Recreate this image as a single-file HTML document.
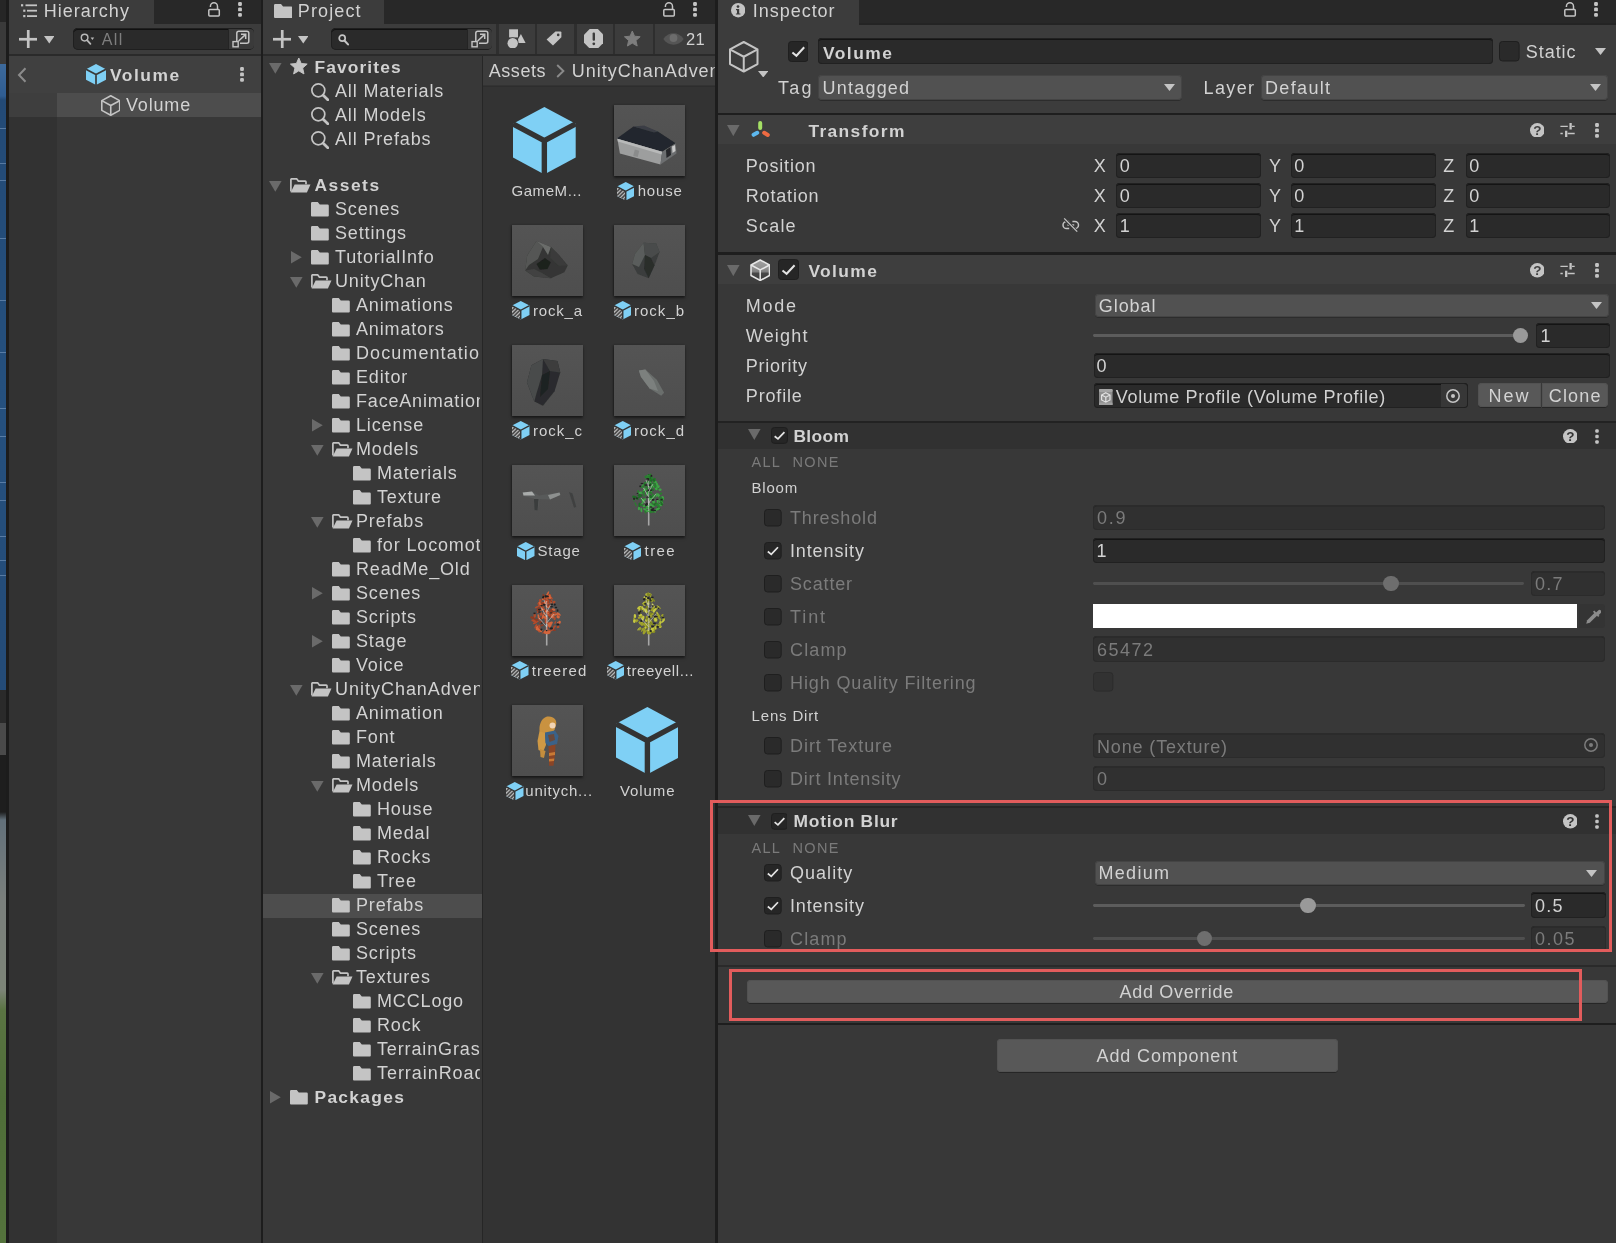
<!DOCTYPE html><html><head><meta charset="utf-8"><title>Unity Editor</title><style>html,body{margin:0;padding:0;}body{width:1616px;height:1243px;overflow:hidden;background:#383838;font-family:"Liberation Sans", sans-serif;position:relative;}div,span,svg{position:absolute;display:block;}span{white-space:nowrap;}</style></head><body><div id="root" style="left:0;top:0;width:1616px;height:1243px;will-change:transform;">
<div style="left:0px;top:0px;width:5.7px;height:1243px;background:#2a2a2a;"></div>
<div style="left:0;top:0;width:5.7px;height:1243px;background:linear-gradient(to bottom,#262626 0,#262626 22px,#3a3a3a 22px,#3a3a3a 64px,#3d6a9c 64px,#2f5d92 96px,#234a76 100px,#25507e 400px,#244b77 690px,#2a2a2a 690px,#2a2a2a 723px,#4a4a4a 723px,#4a4a4a 755px,#1e1e1e 755px,#1e1e1e 812px,#62707a 820px,#7a7f7c 900px,#7c8477 990px,#5a7442 1010px,#4f6e38 1100px,#54733c 1243px);"></div>
<div style="left:0px;top:128px;width:5.7px;height:1.2px;background:rgba(150,180,215,0.45);"></div>
<div style="left:0px;top:163px;width:5.7px;height:1.2px;background:rgba(150,180,215,0.45);"></div>
<div style="left:0px;top:180px;width:5.7px;height:1.2px;background:rgba(150,180,215,0.45);"></div>
<div style="left:0px;top:238px;width:5.7px;height:1.2px;background:rgba(150,180,215,0.45);"></div>
<div style="left:0px;top:300px;width:5.7px;height:1.2px;background:rgba(150,180,215,0.45);"></div>
<div style="left:0px;top:352px;width:5.7px;height:1.2px;background:rgba(150,180,215,0.45);"></div>
<div style="left:0px;top:408px;width:5.7px;height:1.2px;background:rgba(150,180,215,0.45);"></div>
<div style="left:0px;top:436px;width:5.7px;height:1.2px;background:rgba(150,180,215,0.45);"></div>
<div style="left:0px;top:482px;width:5.7px;height:1.2px;background:rgba(150,180,215,0.45);"></div>
<div style="left:0px;top:500px;width:5.7px;height:1.2px;background:rgba(150,180,215,0.45);"></div>
<div style="left:0px;top:536px;width:5.7px;height:1.2px;background:rgba(150,180,215,0.45);"></div>
<div style="left:0px;top:560px;width:5.7px;height:1.2px;background:rgba(150,180,215,0.45);"></div>
<div style="left:0px;top:575px;width:5.7px;height:1.2px;background:rgba(150,180,215,0.45);"></div>
<div style="left:5.7px;top:0px;width:3.3px;height:1243px;background:#1c1c1c;"></div>
<div style="left:9px;top:0px;width:251.5px;height:23.5px;background:#282828;"></div>
<div style="left:9px;top:0px;width:145px;height:23.5px;background:#3c3c3c;"></div>
<div style="left:9px;top:23.5px;width:251.5px;height:30.8px;background:#3c3c3c;"></div>
<div style="left:9px;top:54.3px;width:251.5px;height:1.5px;background:#2a2a2a;"></div>
<div style="left:9px;top:55.8px;width:251.5px;height:1187.2px;background:#383838;"></div>
<div style="left:9px;top:55.8px;width:48px;height:1187.2px;background:#323232;"></div>
<div style="left:9px;top:55.8px;width:251.5px;height:37px;background:#404040;"></div>
<div style="left:9px;top:92.8px;width:48px;height:23.8px;background:#3e3e3e;"></div>
<div style="left:57px;top:92.8px;width:203.5px;height:23.8px;background:#4d4d4d;"></div>
<div style="left:260.5px;top:0px;width:2.2px;height:1243px;background:#1d1d1d;"></div>
<svg style="left:21px;top:3.5px;" width="17" height="14" viewBox="0 0 17 14"><g fill="#c4c4c4"><rect x="0" y="0.2" width="2.2" height="2.2"/><rect x="4.5" y="0.4" width="11.5" height="1.8"/><rect x="2.2" y="5.6" width="2.2" height="2.2"/><rect x="6" y="5.8" width="10" height="1.8"/><rect x="2.2" y="11" width="2.2" height="2.2"/><rect x="6" y="11.2" width="10" height="1.8"/></g></svg>
<span style="left:43.8px;top:-1.5px;font-size:18px;line-height:24px;color:#d2d2d2;letter-spacing:1.01px;">Hierarchy</span>
<svg style="left:207.6px;top:2.3px;" width="13" height="16" viewBox="0 0 13 16"><rect x="0.8" y="7.6" width="10.5" height="6.4" rx="0.9" fill="none" stroke="#c4c4c4" stroke-width="1.5"/><path d="M9.5 7.4 V4.4 a3.55 3.55 0 0 0 -7.1 0 V4.9" fill="none" stroke="#c4c4c4" stroke-width="1.5"/></svg>
<svg style="left:237px;top:0.85px;" width="6" height="16.9" viewBox="0 0 6 16.9"><rect x="1.1" y="1.1" width="3.8" height="3.8" rx="1.2" fill="#c4c4c4"/><rect x="1.1" y="6.55" width="3.8" height="3.8" rx="1.2" fill="#c4c4c4"/><rect x="1.1" y="12" width="3.8" height="3.8" rx="1.2" fill="#c4c4c4"/></svg>
<svg style="left:18.75px;top:29.75px;" width="18.5" height="18.5" viewBox="0 0 18.5 18.5"><rect x="0" y="7.9" width="18.5" height="2.7" fill="#c4c4c4"/><rect x="7.9" y="0" width="2.7" height="18.5" fill="#c4c4c4"/></svg>
<svg style="left:43.75px;top:36.25px;" width="10.5" height="7.5" viewBox="0 0 10.5 7.5"><polygon points="0,0 10.5,0 5.25,7.5" fill="#c4c4c4"/></svg>
<div style="left:72.9px;top:27.5px;width:181.1px;height:22.5px;background:#2a2a2a;border-radius:5px;box-shadow:inset 0 0 0 1px #1f1f1f, inset 0 2px 0 0 #111111;"></div>
<div style="left:227.5px;top:28.5px;width:25.5px;height:20.5px;background:#3a3a3a;border-radius:0 4px 4px 0;border-left:1px solid #242424;"></div>
<svg style="left:80px;top:32.5px;" width="16" height="13" viewBox="0 0 16 13"><circle cx="4.6" cy="4.6" r="3.3" fill="none" stroke="#b8b8b8" stroke-width="1.45"/><line x1="7" y1="7.2" x2="10.4" y2="10.8" stroke="#b8b8b8" stroke-width="1.8" stroke-linecap="round"/><polygon points="10.6,4.6 14.2,4.6 12.4,7" fill="#b8b8b8"/></svg>
<span style="left:101.8px;top:27.5px;font-size:16px;line-height:24px;color:#7e7e7e;letter-spacing:1.36px;">All</span>
<svg style="left:232px;top:30px;" width="18" height="18" viewBox="0 0 18 18"><path d="M4.8 11.2 V3.2 a2 2 0 0 1 2 -2 H14.8 a2 2 0 0 1 2 2 V11.2 a2 2 0 0 1 -2 2 H8" fill="none" stroke="#c4c4c4" stroke-width="1.5"/><rect x="1" y="11.6" width="5.2" height="5.2" fill="none" stroke="#c4c4c4" stroke-width="1.4"/><path d="M6.6 11 L13.4 4.6 M9 4.3 H13.7 V9" fill="none" stroke="#c4c4c4" stroke-width="1.5"/></svg>
<svg style="left:16.5px;top:66.5px;" width="10" height="16" viewBox="0 0 10 16"><path d="M8.5 1.2 L2 8 L8.5 14.8" fill="none" stroke="#8c8c8c" stroke-width="2"/></svg>
<svg style="left:86px;top:63.5px;" width="20" height="21" viewBox="0 0 20 21"><polygon points="10,0 20,5.25 20,15.75 10,21 0,15.75 0,5.25" fill="#7fd0f5"/><path d="M0 5.25 L10 10.5 L20 5.25 M10 10.5 V21" fill="none" stroke="#3a3a3a" stroke-width="1.7"/></svg>
<span style="left:110px;top:63px;font-size:17.4px;line-height:24px;color:#d2d2d2;letter-spacing:1.51px;font-weight:bold;">Volume</span>
<svg style="left:238.5px;top:65.75px;" width="6" height="16.9" viewBox="0 0 6 16.9"><rect x="1.1" y="1.1" width="3.8" height="3.8" rx="1.2" fill="#c4c4c4"/><rect x="1.1" y="6.55" width="3.8" height="3.8" rx="1.2" fill="#c4c4c4"/><rect x="1.1" y="12" width="3.8" height="3.8" rx="1.2" fill="#c4c4c4"/></svg>
<svg style="left:100.5px;top:94.5px;" width="19.5" height="21" viewBox="0 0 19.5 21"><polygon points="9.75,0.8 18.7,5.65 18.7,15.35 9.75,20.2 0.8,15.35 0.8,5.65" fill="none" stroke="#c4c4c4" stroke-width="1.6" stroke-linejoin="round"/><path d="M0.8 5.65 L9.75 10.5 L18.7 5.65 M9.75 10.5 V20.2" fill="none" stroke="#c4c4c4" stroke-width="1.6"/></svg>
<span style="left:126px;top:92.5px;font-size:18px;line-height:24px;color:#d2d2d2;letter-spacing:0.83px;">Volume</span>
<div style="left:262.7px;top:0px;width:452.6px;height:23.5px;background:#282828;"></div>
<div style="left:262.7px;top:0px;width:121.3px;height:23.5px;background:#3c3c3c;"></div>
<div style="left:262.7px;top:23.5px;width:452.6px;height:30.8px;background:#3c3c3c;"></div>
<div style="left:262.7px;top:54.3px;width:452.6px;height:1.5px;background:#2a2a2a;"></div>
<div style="left:262.7px;top:55.8px;width:219px;height:1187.2px;background:#383838;"></div>
<div style="left:481.7px;top:55.8px;width:1.7px;height:1187.2px;background:#262626;"></div>
<div style="left:483.4px;top:55.8px;width:231.9px;height:1187.2px;background:#333333;"></div>
<div style="left:483.4px;top:55.8px;width:231.9px;height:29.7px;background:#3c3c3c;"></div>
<div style="left:483.4px;top:85.5px;width:231.9px;height:1.3px;background:#2d2d2d;"></div>
<div style="left:715.3px;top:0px;width:2.3px;height:1243px;background:#1d1d1d;"></div>
<svg style="left:273.7px;top:4px;" width="18.5" height="14" viewBox="0 0 18.5 14"><path d="M0 1.2 a1.2 1.2 0 0 1 1.2 -1.2 H7.03 l2 2.6 H17.3 a1.2 1.2 0 0 1 1.2 1.2 V13 a1 1 0 0 1 -1 1 H1 a1 1 0 0 1 -1 -1 Z" fill="#c4c4c4"/></svg>
<span style="left:297.8px;top:-1.5px;font-size:18px;line-height:24px;color:#d2d2d2;letter-spacing:1.13px;">Project</span>
<svg style="left:662.6px;top:2.3px;" width="13" height="16" viewBox="0 0 13 16"><rect x="0.8" y="7.6" width="10.5" height="6.4" rx="0.9" fill="none" stroke="#c4c4c4" stroke-width="1.5"/><path d="M9.5 7.4 V4.4 a3.55 3.55 0 0 0 -7.1 0 V4.9" fill="none" stroke="#c4c4c4" stroke-width="1.5"/></svg>
<svg style="left:692.3px;top:0.85px;" width="6" height="16.9" viewBox="0 0 6 16.9"><rect x="1.1" y="1.1" width="3.8" height="3.8" rx="1.2" fill="#c4c4c4"/><rect x="1.1" y="6.55" width="3.8" height="3.8" rx="1.2" fill="#c4c4c4"/><rect x="1.1" y="12" width="3.8" height="3.8" rx="1.2" fill="#c4c4c4"/></svg>
<svg style="left:272.75px;top:29.75px;" width="18.5" height="18.5" viewBox="0 0 18.5 18.5"><rect x="0" y="7.9" width="18.5" height="2.7" fill="#c4c4c4"/><rect x="7.9" y="0" width="2.7" height="18.5" fill="#c4c4c4"/></svg>
<svg style="left:297.75px;top:36.25px;" width="10.5" height="7.5" viewBox="0 0 10.5 7.5"><polygon points="0,0 10.5,0 5.25,7.5" fill="#c4c4c4"/></svg>
<div style="left:331px;top:27.5px;width:161px;height:22.5px;background:#2a2a2a;border-radius:5px;box-shadow:inset 0 0 0 1px #1f1f1f, inset 0 2px 0 0 #111111;"></div>
<div style="left:466.5px;top:28.5px;width:24.5px;height:20.5px;background:#3a3a3a;border-radius:0 4px 4px 0;border-left:1px solid #242424;"></div>
<svg style="left:338px;top:33.5px;" width="12" height="12" viewBox="0 0 12 12"><circle cx="4.2" cy="4.2" r="3" fill="none" stroke="#c4c4c4" stroke-width="1.7"/><line x1="6.6" y1="6.8" x2="10" y2="10.4" stroke="#c4c4c4" stroke-width="2.1" stroke-linecap="round"/></svg>
<svg style="left:470.5px;top:30px;" width="18" height="18" viewBox="0 0 18 18"><path d="M4.8 11.2 V3.2 a2 2 0 0 1 2 -2 H14.8 a2 2 0 0 1 2 2 V11.2 a2 2 0 0 1 -2 2 H8" fill="none" stroke="#c4c4c4" stroke-width="1.5"/><rect x="1" y="11.6" width="5.2" height="5.2" fill="none" stroke="#c4c4c4" stroke-width="1.4"/><path d="M6.6 11 L13.4 4.6 M9 4.3 H13.7 V9" fill="none" stroke="#c4c4c4" stroke-width="1.5"/></svg>
<div style="left:496.4px;top:23.5px;width:2.4px;height:30.8px;background:#2e2e2e;"></div>
<div style="left:535.1px;top:23.5px;width:2.4px;height:30.8px;background:#2e2e2e;"></div>
<div style="left:574.4px;top:23.5px;width:2.4px;height:30.8px;background:#2e2e2e;"></div>
<div style="left:613px;top:23.5px;width:2.4px;height:30.8px;background:#2e2e2e;"></div>
<div style="left:652.6px;top:23.5px;width:2.4px;height:30.8px;background:#2e2e2e;"></div>
<svg style="left:506.5px;top:28.5px;" width="19" height="19.5" viewBox="0 0 19 19.5"><g fill="#c4c4c4"><rect x="2.1" y="0.3" width="8.9" height="8.1"/><circle cx="5.7" cy="14.3" r="5.9" fill="#3c3c3c"/><circle cx="5.7" cy="14.3" r="5.2"/><polygon points="13.9,5 18.6,13.9 11.6,13.9 11,10.2"/></g></svg>
<svg style="left:546px;top:31px;" width="16" height="15" viewBox="0 0 16 15"><path d="M9.4 0.6 H14.4 a1 1 0 0 1 1 1 V6.2 L7 14.4 L0.6 8.4 Z" fill="#c4c4c4"/><circle cx="12.2" cy="3.9" r="1.3" fill="#3c3c3c"/></svg>
<svg style="left:583.5px;top:28.5px;" width="19.5" height="19.5" viewBox="0 0 19.5 19.5"><polygon points="5.7,0 13.8,0 19.5,5.7 19.5,13.8 13.8,19.5 5.7,19.5 0,13.8 0,5.7" fill="#c4c4c4"/><rect x="8.6" y="3.6" width="2.4" height="8.2" rx="1" fill="#3c3c3c"/><circle cx="9.8" cy="14.8" r="1.4" fill="#3c3c3c"/></svg>
<svg style="left:624.3px;top:30.7px;" width="16.6" height="16.6" viewBox="0 0 16.6 16.6"><polygon points="8.3,0 10.54,5.21 16.19,5.74 11.93,9.48 13.18,15.01 8.3,12.12 3.42,15.01 4.67,9.48 0.41,5.74 6.06,5.21" fill="#7d7d7d" stroke="#7d7d7d" stroke-width="1" stroke-linejoin="round"/></svg>
<svg style="left:662.5px;top:32.5px;" width="21" height="12" viewBox="0 0 21 12"><path d="M0.3 6 C5 -1.6 16 -1.6 20.7 6 C16 13.6 5 13.6 0.3 6 Z" fill="#555555"/><circle cx="10.5" cy="5" r="3.9" fill="#6c6c6c"/></svg>
<span style="left:686px;top:27.3px;font-size:16.5px;line-height:24px;color:#d2d2d2;letter-spacing:0.24px;">21</span>
<span style="left:488.7px;top:58.5px;font-size:18px;line-height:24px;color:#d2d2d2;letter-spacing:0.57px;">Assets</span>
<svg style="left:556px;top:63.8px;" width="9" height="14" viewBox="0 0 9 14"><path d="M1.2 1 L7.4 7 L1.2 13" fill="none" stroke="#8a8a8a" stroke-width="1.9"/></svg>
<span style="left:571.8px;top:58.5px;font-size:18px;line-height:24px;color:#d2d2d2;letter-spacing:0.98px;width:143.5px;overflow:hidden;">UnityChanAdventure</span>
<div style="left:262.7px;top:894px;width:219px;height:23.6px;background:#4d4d4d;"></div>
<svg style="left:269px;top:62.8px;" width="12.6" height="10.8" viewBox="0 0 12.6 10.8"><polygon points="0,0 12.6,0 6.3,10.8" fill="#6a6a6a"/></svg>
<svg style="left:290.2px;top:58.2px;" width="17.6" height="17.6" viewBox="0 0 17.6 17.6"><polygon points="8.8,0 11.18,5.53 17.17,6.08 12.65,10.05 13.97,15.92 8.8,12.85 3.63,15.92 4.95,10.05 0.43,6.08 6.42,5.53" fill="#c4c4c4" stroke="#c4c4c4" stroke-width="1" stroke-linejoin="round"/></svg>
<span style="left:314.5px;top:54.7px;font-size:17.4px;line-height:24px;color:#d2d2d2;letter-spacing:1.1px;font-weight:bold;width:165.2px;overflow:hidden;">Favorites</span>
<svg style="left:311px;top:82.5px;" width="18" height="18" viewBox="0 0 18 18"><circle cx="7.33" cy="7.33" r="6.48" fill="none" stroke="#c4c4c4" stroke-width="1.7"/><line x1="12.19" y1="12.19" x2="16.8" y2="16.8" stroke="#c4c4c4" stroke-width="2.72" stroke-linecap="round"/></svg>
<span style="left:335px;top:78.7px;font-size:18px;line-height:24px;color:#d2d2d2;letter-spacing:0.5px;width:144.7px;overflow:hidden;letter-spacing:0.85px;">All Materials</span>
<svg style="left:311px;top:106.5px;" width="18" height="18" viewBox="0 0 18 18"><circle cx="7.33" cy="7.33" r="6.48" fill="none" stroke="#c4c4c4" stroke-width="1.7"/><line x1="12.19" y1="12.19" x2="16.8" y2="16.8" stroke="#c4c4c4" stroke-width="2.72" stroke-linecap="round"/></svg>
<span style="left:335px;top:102.7px;font-size:18px;line-height:24px;color:#d2d2d2;letter-spacing:0.5px;width:144.7px;overflow:hidden;letter-spacing:0.85px;">All Models</span>
<svg style="left:311px;top:130.5px;" width="18" height="18" viewBox="0 0 18 18"><circle cx="7.33" cy="7.33" r="6.48" fill="none" stroke="#c4c4c4" stroke-width="1.7"/><line x1="12.19" y1="12.19" x2="16.8" y2="16.8" stroke="#c4c4c4" stroke-width="2.72" stroke-linecap="round"/></svg>
<span style="left:335px;top:126.7px;font-size:18px;line-height:24px;color:#d2d2d2;letter-spacing:0.5px;width:144.7px;overflow:hidden;letter-spacing:0.85px;">All Prefabs</span>
<svg style="left:269px;top:180.8px;" width="12.6" height="10.8" viewBox="0 0 12.6 10.8"><polygon points="0,0 12.6,0 6.3,10.8" fill="#6a6a6a"/></svg>
<svg style="left:290px;top:178px;" width="20.5" height="14.5" viewBox="0 0 20.5 14.5"><path d="M0.9 13.5 V1.6 a0.8 0.8 0 0 1 0.8 -0.8 H6.6 l1.8 2.3 H15.2 a0.8 0.8 0 0 1 0.8 0.8 V6.2" fill="none" stroke="#c4c4c4" stroke-width="1.7"/><path d="M4.6 6.4 H20.5 L16.9 14.5 H0.6 Z" fill="#c4c4c4"/></svg>
<span style="left:314.5px;top:172.7px;font-size:17.4px;line-height:24px;color:#d2d2d2;letter-spacing:1.51px;font-weight:bold;width:165.2px;overflow:hidden;">Assets</span>
<svg style="left:311px;top:202px;" width="17.8" height="14.5" viewBox="0 0 17.8 14.5"><path d="M0 1.2 a1.2 1.2 0 0 1 1.2 -1.2 H6.76 l2 2.6 H16.6 a1.2 1.2 0 0 1 1.2 1.2 V13.5 a1 1 0 0 1 -1 1 H1 a1 1 0 0 1 -1 -1 Z" fill="#c4c4c4"/></svg>
<span style="left:335px;top:196.7px;font-size:18px;line-height:24px;color:#d2d2d2;letter-spacing:0.5px;width:144.7px;overflow:hidden;letter-spacing:0.85px;">Scenes</span>
<svg style="left:311px;top:226px;" width="17.8" height="14.5" viewBox="0 0 17.8 14.5"><path d="M0 1.2 a1.2 1.2 0 0 1 1.2 -1.2 H6.76 l2 2.6 H16.6 a1.2 1.2 0 0 1 1.2 1.2 V13.5 a1 1 0 0 1 -1 1 H1 a1 1 0 0 1 -1 -1 Z" fill="#c4c4c4"/></svg>
<span style="left:335px;top:220.7px;font-size:18px;line-height:24px;color:#d2d2d2;letter-spacing:0.5px;width:144.7px;overflow:hidden;letter-spacing:0.85px;">Settings</span>
<svg style="left:291.4px;top:251.2px;" width="10.8" height="12.6" viewBox="0 0 10.8 12.6"><polygon points="0,0 10.8,6.3 0,12.6" fill="#6a6a6a"/></svg>
<svg style="left:311px;top:250px;" width="17.8" height="14.5" viewBox="0 0 17.8 14.5"><path d="M0 1.2 a1.2 1.2 0 0 1 1.2 -1.2 H6.76 l2 2.6 H16.6 a1.2 1.2 0 0 1 1.2 1.2 V13.5 a1 1 0 0 1 -1 1 H1 a1 1 0 0 1 -1 -1 Z" fill="#c4c4c4"/></svg>
<span style="left:335px;top:244.7px;font-size:18px;line-height:24px;color:#d2d2d2;letter-spacing:0.5px;width:144.7px;overflow:hidden;letter-spacing:0.85px;">TutorialInfo</span>
<svg style="left:290px;top:276.8px;" width="12.6" height="10.8" viewBox="0 0 12.6 10.8"><polygon points="0,0 12.6,0 6.3,10.8" fill="#6a6a6a"/></svg>
<svg style="left:311px;top:274px;" width="20.5" height="14.5" viewBox="0 0 20.5 14.5"><path d="M0.9 13.5 V1.6 a0.8 0.8 0 0 1 0.8 -0.8 H6.6 l1.8 2.3 H15.2 a0.8 0.8 0 0 1 0.8 0.8 V6.2" fill="none" stroke="#c4c4c4" stroke-width="1.7"/><path d="M4.6 6.4 H20.5 L16.9 14.5 H0.6 Z" fill="#c4c4c4"/></svg>
<span style="left:335px;top:268.7px;font-size:18px;line-height:24px;color:#d2d2d2;letter-spacing:0.5px;width:144.7px;overflow:hidden;letter-spacing:0.85px;">UnityChan</span>
<svg style="left:332px;top:298px;" width="17.8" height="14.5" viewBox="0 0 17.8 14.5"><path d="M0 1.2 a1.2 1.2 0 0 1 1.2 -1.2 H6.76 l2 2.6 H16.6 a1.2 1.2 0 0 1 1.2 1.2 V13.5 a1 1 0 0 1 -1 1 H1 a1 1 0 0 1 -1 -1 Z" fill="#c4c4c4"/></svg>
<span style="left:356px;top:292.7px;font-size:18px;line-height:24px;color:#d2d2d2;letter-spacing:0.5px;width:123.7px;overflow:hidden;letter-spacing:0.85px;">Animations</span>
<svg style="left:332px;top:322px;" width="17.8" height="14.5" viewBox="0 0 17.8 14.5"><path d="M0 1.2 a1.2 1.2 0 0 1 1.2 -1.2 H6.76 l2 2.6 H16.6 a1.2 1.2 0 0 1 1.2 1.2 V13.5 a1 1 0 0 1 -1 1 H1 a1 1 0 0 1 -1 -1 Z" fill="#c4c4c4"/></svg>
<span style="left:356px;top:316.7px;font-size:18px;line-height:24px;color:#d2d2d2;letter-spacing:0.5px;width:123.7px;overflow:hidden;letter-spacing:0.85px;">Animators</span>
<svg style="left:332px;top:346px;" width="17.8" height="14.5" viewBox="0 0 17.8 14.5"><path d="M0 1.2 a1.2 1.2 0 0 1 1.2 -1.2 H6.76 l2 2.6 H16.6 a1.2 1.2 0 0 1 1.2 1.2 V13.5 a1 1 0 0 1 -1 1 H1 a1 1 0 0 1 -1 -1 Z" fill="#c4c4c4"/></svg>
<span style="left:356px;top:340.7px;font-size:18px;line-height:24px;color:#d2d2d2;letter-spacing:1.08px;width:123.7px;overflow:hidden;">Documentation</span>
<svg style="left:332px;top:370px;" width="17.8" height="14.5" viewBox="0 0 17.8 14.5"><path d="M0 1.2 a1.2 1.2 0 0 1 1.2 -1.2 H6.76 l2 2.6 H16.6 a1.2 1.2 0 0 1 1.2 1.2 V13.5 a1 1 0 0 1 -1 1 H1 a1 1 0 0 1 -1 -1 Z" fill="#c4c4c4"/></svg>
<span style="left:356px;top:364.7px;font-size:18px;line-height:24px;color:#d2d2d2;letter-spacing:0.5px;width:123.7px;overflow:hidden;letter-spacing:0.85px;">Editor</span>
<svg style="left:332px;top:394px;" width="17.8" height="14.5" viewBox="0 0 17.8 14.5"><path d="M0 1.2 a1.2 1.2 0 0 1 1.2 -1.2 H6.76 l2 2.6 H16.6 a1.2 1.2 0 0 1 1.2 1.2 V13.5 a1 1 0 0 1 -1 1 H1 a1 1 0 0 1 -1 -1 Z" fill="#c4c4c4"/></svg>
<span style="left:356px;top:388.7px;font-size:18px;line-height:24px;color:#d2d2d2;letter-spacing:0.81px;width:123.7px;overflow:hidden;">FaceAnimation</span>
<svg style="left:312.4px;top:419.2px;" width="10.8" height="12.6" viewBox="0 0 10.8 12.6"><polygon points="0,0 10.8,6.3 0,12.6" fill="#6a6a6a"/></svg>
<svg style="left:332px;top:418px;" width="17.8" height="14.5" viewBox="0 0 17.8 14.5"><path d="M0 1.2 a1.2 1.2 0 0 1 1.2 -1.2 H6.76 l2 2.6 H16.6 a1.2 1.2 0 0 1 1.2 1.2 V13.5 a1 1 0 0 1 -1 1 H1 a1 1 0 0 1 -1 -1 Z" fill="#c4c4c4"/></svg>
<span style="left:356px;top:412.7px;font-size:18px;line-height:24px;color:#d2d2d2;letter-spacing:0.5px;width:123.7px;overflow:hidden;letter-spacing:0.85px;">License</span>
<svg style="left:311px;top:444.8px;" width="12.6" height="10.8" viewBox="0 0 12.6 10.8"><polygon points="0,0 12.6,0 6.3,10.8" fill="#6a6a6a"/></svg>
<svg style="left:332px;top:442px;" width="20.5" height="14.5" viewBox="0 0 20.5 14.5"><path d="M0.9 13.5 V1.6 a0.8 0.8 0 0 1 0.8 -0.8 H6.6 l1.8 2.3 H15.2 a0.8 0.8 0 0 1 0.8 0.8 V6.2" fill="none" stroke="#c4c4c4" stroke-width="1.7"/><path d="M4.6 6.4 H20.5 L16.9 14.5 H0.6 Z" fill="#c4c4c4"/></svg>
<span style="left:356px;top:436.7px;font-size:18px;line-height:24px;color:#d2d2d2;letter-spacing:0.5px;width:123.7px;overflow:hidden;letter-spacing:0.85px;">Models</span>
<svg style="left:353px;top:466px;" width="17.8" height="14.5" viewBox="0 0 17.8 14.5"><path d="M0 1.2 a1.2 1.2 0 0 1 1.2 -1.2 H6.76 l2 2.6 H16.6 a1.2 1.2 0 0 1 1.2 1.2 V13.5 a1 1 0 0 1 -1 1 H1 a1 1 0 0 1 -1 -1 Z" fill="#c4c4c4"/></svg>
<span style="left:377px;top:460.7px;font-size:18px;line-height:24px;color:#d2d2d2;letter-spacing:0.5px;width:102.7px;overflow:hidden;letter-spacing:0.85px;">Materials</span>
<svg style="left:353px;top:490px;" width="17.8" height="14.5" viewBox="0 0 17.8 14.5"><path d="M0 1.2 a1.2 1.2 0 0 1 1.2 -1.2 H6.76 l2 2.6 H16.6 a1.2 1.2 0 0 1 1.2 1.2 V13.5 a1 1 0 0 1 -1 1 H1 a1 1 0 0 1 -1 -1 Z" fill="#c4c4c4"/></svg>
<span style="left:377px;top:484.7px;font-size:18px;line-height:24px;color:#d2d2d2;letter-spacing:0.5px;width:102.7px;overflow:hidden;letter-spacing:0.85px;">Texture</span>
<svg style="left:311px;top:516.8px;" width="12.6" height="10.8" viewBox="0 0 12.6 10.8"><polygon points="0,0 12.6,0 6.3,10.8" fill="#6a6a6a"/></svg>
<svg style="left:332px;top:514px;" width="20.5" height="14.5" viewBox="0 0 20.5 14.5"><path d="M0.9 13.5 V1.6 a0.8 0.8 0 0 1 0.8 -0.8 H6.6 l1.8 2.3 H15.2 a0.8 0.8 0 0 1 0.8 0.8 V6.2" fill="none" stroke="#c4c4c4" stroke-width="1.7"/><path d="M4.6 6.4 H20.5 L16.9 14.5 H0.6 Z" fill="#c4c4c4"/></svg>
<span style="left:356px;top:508.7px;font-size:18px;line-height:24px;color:#d2d2d2;letter-spacing:0.5px;width:123.7px;overflow:hidden;letter-spacing:0.85px;">Prefabs</span>
<svg style="left:353px;top:538px;" width="17.8" height="14.5" viewBox="0 0 17.8 14.5"><path d="M0 1.2 a1.2 1.2 0 0 1 1.2 -1.2 H6.76 l2 2.6 H16.6 a1.2 1.2 0 0 1 1.2 1.2 V13.5 a1 1 0 0 1 -1 1 H1 a1 1 0 0 1 -1 -1 Z" fill="#c4c4c4"/></svg>
<span style="left:377px;top:532.7px;font-size:18px;line-height:24px;color:#d2d2d2;letter-spacing:0.85px;width:102.7px;overflow:hidden;">for Locomotion</span>
<svg style="left:332px;top:562px;" width="17.8" height="14.5" viewBox="0 0 17.8 14.5"><path d="M0 1.2 a1.2 1.2 0 0 1 1.2 -1.2 H6.76 l2 2.6 H16.6 a1.2 1.2 0 0 1 1.2 1.2 V13.5 a1 1 0 0 1 -1 1 H1 a1 1 0 0 1 -1 -1 Z" fill="#c4c4c4"/></svg>
<span style="left:356px;top:556.7px;font-size:18px;line-height:24px;color:#d2d2d2;letter-spacing:0.5px;width:123.7px;overflow:hidden;letter-spacing:0.85px;">ReadMe_Old</span>
<svg style="left:312.4px;top:587.2px;" width="10.8" height="12.6" viewBox="0 0 10.8 12.6"><polygon points="0,0 10.8,6.3 0,12.6" fill="#6a6a6a"/></svg>
<svg style="left:332px;top:586px;" width="17.8" height="14.5" viewBox="0 0 17.8 14.5"><path d="M0 1.2 a1.2 1.2 0 0 1 1.2 -1.2 H6.76 l2 2.6 H16.6 a1.2 1.2 0 0 1 1.2 1.2 V13.5 a1 1 0 0 1 -1 1 H1 a1 1 0 0 1 -1 -1 Z" fill="#c4c4c4"/></svg>
<span style="left:356px;top:580.7px;font-size:18px;line-height:24px;color:#d2d2d2;letter-spacing:0.5px;width:123.7px;overflow:hidden;letter-spacing:0.85px;">Scenes</span>
<svg style="left:332px;top:610px;" width="17.8" height="14.5" viewBox="0 0 17.8 14.5"><path d="M0 1.2 a1.2 1.2 0 0 1 1.2 -1.2 H6.76 l2 2.6 H16.6 a1.2 1.2 0 0 1 1.2 1.2 V13.5 a1 1 0 0 1 -1 1 H1 a1 1 0 0 1 -1 -1 Z" fill="#c4c4c4"/></svg>
<span style="left:356px;top:604.7px;font-size:18px;line-height:24px;color:#d2d2d2;letter-spacing:0.5px;width:123.7px;overflow:hidden;letter-spacing:0.85px;">Scripts</span>
<svg style="left:312.4px;top:635.2px;" width="10.8" height="12.6" viewBox="0 0 10.8 12.6"><polygon points="0,0 10.8,6.3 0,12.6" fill="#6a6a6a"/></svg>
<svg style="left:332px;top:634px;" width="17.8" height="14.5" viewBox="0 0 17.8 14.5"><path d="M0 1.2 a1.2 1.2 0 0 1 1.2 -1.2 H6.76 l2 2.6 H16.6 a1.2 1.2 0 0 1 1.2 1.2 V13.5 a1 1 0 0 1 -1 1 H1 a1 1 0 0 1 -1 -1 Z" fill="#c4c4c4"/></svg>
<span style="left:356px;top:628.7px;font-size:18px;line-height:24px;color:#d2d2d2;letter-spacing:0.5px;width:123.7px;overflow:hidden;letter-spacing:0.85px;">Stage</span>
<svg style="left:332px;top:658px;" width="17.8" height="14.5" viewBox="0 0 17.8 14.5"><path d="M0 1.2 a1.2 1.2 0 0 1 1.2 -1.2 H6.76 l2 2.6 H16.6 a1.2 1.2 0 0 1 1.2 1.2 V13.5 a1 1 0 0 1 -1 1 H1 a1 1 0 0 1 -1 -1 Z" fill="#c4c4c4"/></svg>
<span style="left:356px;top:652.7px;font-size:18px;line-height:24px;color:#d2d2d2;letter-spacing:0.5px;width:123.7px;overflow:hidden;letter-spacing:0.85px;">Voice</span>
<svg style="left:290px;top:684.8px;" width="12.6" height="10.8" viewBox="0 0 12.6 10.8"><polygon points="0,0 12.6,0 6.3,10.8" fill="#6a6a6a"/></svg>
<svg style="left:311px;top:682px;" width="20.5" height="14.5" viewBox="0 0 20.5 14.5"><path d="M0.9 13.5 V1.6 a0.8 0.8 0 0 1 0.8 -0.8 H6.6 l1.8 2.3 H15.2 a0.8 0.8 0 0 1 0.8 0.8 V6.2" fill="none" stroke="#c4c4c4" stroke-width="1.7"/><path d="M4.6 6.4 H20.5 L16.9 14.5 H0.6 Z" fill="#c4c4c4"/></svg>
<span style="left:335px;top:676.7px;font-size:18px;line-height:24px;color:#d2d2d2;letter-spacing:0.98px;width:144.7px;overflow:hidden;">UnityChanAdventure</span>
<svg style="left:332px;top:706px;" width="17.8" height="14.5" viewBox="0 0 17.8 14.5"><path d="M0 1.2 a1.2 1.2 0 0 1 1.2 -1.2 H6.76 l2 2.6 H16.6 a1.2 1.2 0 0 1 1.2 1.2 V13.5 a1 1 0 0 1 -1 1 H1 a1 1 0 0 1 -1 -1 Z" fill="#c4c4c4"/></svg>
<span style="left:356px;top:700.7px;font-size:18px;line-height:24px;color:#d2d2d2;letter-spacing:0.5px;width:123.7px;overflow:hidden;letter-spacing:0.85px;">Animation</span>
<svg style="left:332px;top:730px;" width="17.8" height="14.5" viewBox="0 0 17.8 14.5"><path d="M0 1.2 a1.2 1.2 0 0 1 1.2 -1.2 H6.76 l2 2.6 H16.6 a1.2 1.2 0 0 1 1.2 1.2 V13.5 a1 1 0 0 1 -1 1 H1 a1 1 0 0 1 -1 -1 Z" fill="#c4c4c4"/></svg>
<span style="left:356px;top:724.7px;font-size:18px;line-height:24px;color:#d2d2d2;letter-spacing:0.5px;width:123.7px;overflow:hidden;letter-spacing:0.85px;">Font</span>
<svg style="left:332px;top:754px;" width="17.8" height="14.5" viewBox="0 0 17.8 14.5"><path d="M0 1.2 a1.2 1.2 0 0 1 1.2 -1.2 H6.76 l2 2.6 H16.6 a1.2 1.2 0 0 1 1.2 1.2 V13.5 a1 1 0 0 1 -1 1 H1 a1 1 0 0 1 -1 -1 Z" fill="#c4c4c4"/></svg>
<span style="left:356px;top:748.7px;font-size:18px;line-height:24px;color:#d2d2d2;letter-spacing:0.5px;width:123.7px;overflow:hidden;letter-spacing:0.85px;">Materials</span>
<svg style="left:311px;top:780.8px;" width="12.6" height="10.8" viewBox="0 0 12.6 10.8"><polygon points="0,0 12.6,0 6.3,10.8" fill="#6a6a6a"/></svg>
<svg style="left:332px;top:778px;" width="20.5" height="14.5" viewBox="0 0 20.5 14.5"><path d="M0.9 13.5 V1.6 a0.8 0.8 0 0 1 0.8 -0.8 H6.6 l1.8 2.3 H15.2 a0.8 0.8 0 0 1 0.8 0.8 V6.2" fill="none" stroke="#c4c4c4" stroke-width="1.7"/><path d="M4.6 6.4 H20.5 L16.9 14.5 H0.6 Z" fill="#c4c4c4"/></svg>
<span style="left:356px;top:772.7px;font-size:18px;line-height:24px;color:#d2d2d2;letter-spacing:0.5px;width:123.7px;overflow:hidden;letter-spacing:0.85px;">Models</span>
<svg style="left:353px;top:802px;" width="17.8" height="14.5" viewBox="0 0 17.8 14.5"><path d="M0 1.2 a1.2 1.2 0 0 1 1.2 -1.2 H6.76 l2 2.6 H16.6 a1.2 1.2 0 0 1 1.2 1.2 V13.5 a1 1 0 0 1 -1 1 H1 a1 1 0 0 1 -1 -1 Z" fill="#c4c4c4"/></svg>
<span style="left:377px;top:796.7px;font-size:18px;line-height:24px;color:#d2d2d2;letter-spacing:0.5px;width:102.7px;overflow:hidden;letter-spacing:0.85px;">House</span>
<svg style="left:353px;top:826px;" width="17.8" height="14.5" viewBox="0 0 17.8 14.5"><path d="M0 1.2 a1.2 1.2 0 0 1 1.2 -1.2 H6.76 l2 2.6 H16.6 a1.2 1.2 0 0 1 1.2 1.2 V13.5 a1 1 0 0 1 -1 1 H1 a1 1 0 0 1 -1 -1 Z" fill="#c4c4c4"/></svg>
<span style="left:377px;top:820.7px;font-size:18px;line-height:24px;color:#d2d2d2;letter-spacing:0.5px;width:102.7px;overflow:hidden;letter-spacing:0.85px;">Medal</span>
<svg style="left:353px;top:850px;" width="17.8" height="14.5" viewBox="0 0 17.8 14.5"><path d="M0 1.2 a1.2 1.2 0 0 1 1.2 -1.2 H6.76 l2 2.6 H16.6 a1.2 1.2 0 0 1 1.2 1.2 V13.5 a1 1 0 0 1 -1 1 H1 a1 1 0 0 1 -1 -1 Z" fill="#c4c4c4"/></svg>
<span style="left:377px;top:844.7px;font-size:18px;line-height:24px;color:#d2d2d2;letter-spacing:0.5px;width:102.7px;overflow:hidden;letter-spacing:0.85px;">Rocks</span>
<svg style="left:353px;top:874px;" width="17.8" height="14.5" viewBox="0 0 17.8 14.5"><path d="M0 1.2 a1.2 1.2 0 0 1 1.2 -1.2 H6.76 l2 2.6 H16.6 a1.2 1.2 0 0 1 1.2 1.2 V13.5 a1 1 0 0 1 -1 1 H1 a1 1 0 0 1 -1 -1 Z" fill="#c4c4c4"/></svg>
<span style="left:377px;top:868.7px;font-size:18px;line-height:24px;color:#d2d2d2;letter-spacing:0.5px;width:102.7px;overflow:hidden;letter-spacing:0.85px;">Tree</span>
<svg style="left:332px;top:898px;" width="17.8" height="14.5" viewBox="0 0 17.8 14.5"><path d="M0 1.2 a1.2 1.2 0 0 1 1.2 -1.2 H6.76 l2 2.6 H16.6 a1.2 1.2 0 0 1 1.2 1.2 V13.5 a1 1 0 0 1 -1 1 H1 a1 1 0 0 1 -1 -1 Z" fill="#c4c4c4"/></svg>
<span style="left:356px;top:892.7px;font-size:18px;line-height:24px;color:#d2d2d2;letter-spacing:0.5px;width:123.7px;overflow:hidden;letter-spacing:0.85px;">Prefabs</span>
<svg style="left:332px;top:922px;" width="17.8" height="14.5" viewBox="0 0 17.8 14.5"><path d="M0 1.2 a1.2 1.2 0 0 1 1.2 -1.2 H6.76 l2 2.6 H16.6 a1.2 1.2 0 0 1 1.2 1.2 V13.5 a1 1 0 0 1 -1 1 H1 a1 1 0 0 1 -1 -1 Z" fill="#c4c4c4"/></svg>
<span style="left:356px;top:916.7px;font-size:18px;line-height:24px;color:#d2d2d2;letter-spacing:0.5px;width:123.7px;overflow:hidden;letter-spacing:0.85px;">Scenes</span>
<svg style="left:332px;top:946px;" width="17.8" height="14.5" viewBox="0 0 17.8 14.5"><path d="M0 1.2 a1.2 1.2 0 0 1 1.2 -1.2 H6.76 l2 2.6 H16.6 a1.2 1.2 0 0 1 1.2 1.2 V13.5 a1 1 0 0 1 -1 1 H1 a1 1 0 0 1 -1 -1 Z" fill="#c4c4c4"/></svg>
<span style="left:356px;top:940.7px;font-size:18px;line-height:24px;color:#d2d2d2;letter-spacing:0.5px;width:123.7px;overflow:hidden;letter-spacing:0.85px;">Scripts</span>
<svg style="left:311px;top:972.8px;" width="12.6" height="10.8" viewBox="0 0 12.6 10.8"><polygon points="0,0 12.6,0 6.3,10.8" fill="#6a6a6a"/></svg>
<svg style="left:332px;top:970px;" width="20.5" height="14.5" viewBox="0 0 20.5 14.5"><path d="M0.9 13.5 V1.6 a0.8 0.8 0 0 1 0.8 -0.8 H6.6 l1.8 2.3 H15.2 a0.8 0.8 0 0 1 0.8 0.8 V6.2" fill="none" stroke="#c4c4c4" stroke-width="1.7"/><path d="M4.6 6.4 H20.5 L16.9 14.5 H0.6 Z" fill="#c4c4c4"/></svg>
<span style="left:356px;top:964.7px;font-size:18px;line-height:24px;color:#d2d2d2;letter-spacing:0.5px;width:123.7px;overflow:hidden;letter-spacing:0.85px;">Textures</span>
<svg style="left:353px;top:994px;" width="17.8" height="14.5" viewBox="0 0 17.8 14.5"><path d="M0 1.2 a1.2 1.2 0 0 1 1.2 -1.2 H6.76 l2 2.6 H16.6 a1.2 1.2 0 0 1 1.2 1.2 V13.5 a1 1 0 0 1 -1 1 H1 a1 1 0 0 1 -1 -1 Z" fill="#c4c4c4"/></svg>
<span style="left:377px;top:988.7px;font-size:18px;line-height:24px;color:#d2d2d2;letter-spacing:0.5px;width:102.7px;overflow:hidden;letter-spacing:0.85px;">MCCLogo</span>
<svg style="left:353px;top:1018px;" width="17.8" height="14.5" viewBox="0 0 17.8 14.5"><path d="M0 1.2 a1.2 1.2 0 0 1 1.2 -1.2 H6.76 l2 2.6 H16.6 a1.2 1.2 0 0 1 1.2 1.2 V13.5 a1 1 0 0 1 -1 1 H1 a1 1 0 0 1 -1 -1 Z" fill="#c4c4c4"/></svg>
<span style="left:377px;top:1012.7px;font-size:18px;line-height:24px;color:#d2d2d2;letter-spacing:0.5px;width:102.7px;overflow:hidden;letter-spacing:0.85px;">Rock</span>
<svg style="left:353px;top:1042px;" width="17.8" height="14.5" viewBox="0 0 17.8 14.5"><path d="M0 1.2 a1.2 1.2 0 0 1 1.2 -1.2 H6.76 l2 2.6 H16.6 a1.2 1.2 0 0 1 1.2 1.2 V13.5 a1 1 0 0 1 -1 1 H1 a1 1 0 0 1 -1 -1 Z" fill="#c4c4c4"/></svg>
<span style="left:377px;top:1036.7px;font-size:18px;line-height:24px;color:#d2d2d2;letter-spacing:0.86px;width:102.7px;overflow:hidden;">TerrainGrass</span>
<svg style="left:353px;top:1066px;" width="17.8" height="14.5" viewBox="0 0 17.8 14.5"><path d="M0 1.2 a1.2 1.2 0 0 1 1.2 -1.2 H6.76 l2 2.6 H16.6 a1.2 1.2 0 0 1 1.2 1.2 V13.5 a1 1 0 0 1 -1 1 H1 a1 1 0 0 1 -1 -1 Z" fill="#c4c4c4"/></svg>
<span style="left:377px;top:1060.7px;font-size:18px;line-height:24px;color:#d2d2d2;letter-spacing:0.95px;width:102.7px;overflow:hidden;">TerrainRoad</span>
<svg style="left:270.4px;top:1091.2px;" width="10.8" height="12.6" viewBox="0 0 10.8 12.6"><polygon points="0,0 10.8,6.3 0,12.6" fill="#6a6a6a"/></svg>
<svg style="left:290px;top:1090px;" width="17.8" height="14.5" viewBox="0 0 17.8 14.5"><path d="M0 1.2 a1.2 1.2 0 0 1 1.2 -1.2 H6.76 l2 2.6 H16.6 a1.2 1.2 0 0 1 1.2 1.2 V13.5 a1 1 0 0 1 -1 1 H1 a1 1 0 0 1 -1 -1 Z" fill="#c4c4c4"/></svg>
<span style="left:314.5px;top:1084.7px;font-size:17.4px;line-height:24px;color:#d2d2d2;letter-spacing:1.3px;font-weight:bold;width:165.2px;overflow:hidden;">Packages</span>
<svg style="left:513.3px;top:106.8px;" width="62.7" height="67.4" viewBox="0 0 62.7 67.4"><polygon points="31.35,0 62.7,16.85 62.7,50.55 31.35,67.4 0,50.55 0,16.85" fill="#7fd0f5"/><path d="M0 16.85 L31.35 33.7 L62.7 16.85 M31.35 33.7 V67.4" fill="none" stroke="#333333" stroke-width="5.4"/></svg>
<span style="left:511.4px;top:180.8px;font-size:15px;line-height:20px;color:#d2d2d2;letter-spacing:0.59px;">GameM...</span>
<div style="left:613.8px;top:105px;width:71px;height:71px;background:linear-gradient(to bottom,#545454,#4e4e4e);box-shadow:0 1.5px 2.5px rgba(0,0,0,0.5), -1px 0 1.5px rgba(0,0,0,0.25);"></div>
<svg style="left:613.8px;top:105px;" width="71" height="71" viewBox="0 0 71 71"><defs><filter id="bl1" x="-10%" y="-10%" width="120%" height="120%"><feGaussianBlur stdDeviation="0.55"/></filter></defs><g filter="url(#bl1)"><polygon points="4.2,32.4 19.4,21.5 43.9,26.5 61.7,38.3 48.1,46.8 3.4,33.8" fill="#23272d"/><polygon points="19.4,21.5 30,20.5 44,26.5 40,27.5" fill="#3a3e44"/><polygon points="3.4,33.8 48.1,46.8 46.5,59.5 5.9,48.5" fill="#9d9e9e"/><polygon points="3.4,33.8 48.1,46.8 47.8,49.5 3.8,36.5" fill="#b8b9b9"/><polygon points="48.1,46.8 61.7,38.3 62.5,48.5 46.5,59.5" fill="#6c6e6f"/><polygon points="52,45 56.5,42 57,50 52.5,53" fill="#26282a"/><polygon points="58,41.5 61,40 61.5,46 58.5,48" fill="#c9c9c9"/><rect x="20" y="45" width="4.6" height="6.5" fill="#8a8b8b" transform="rotate(14 22 48)"/></g></svg>
<svg style="left:616.7px;top:181.6px;" width="17.5" height="18.5" viewBox="0 0 17.5 18.5"><polygon points="8.75,0 17.5,4.62 17.5,13.88 8.75,18.5 0,13.88 0,4.62" fill="#7fd0f5"/><polygon points="0,4.62 8.75,9.25 8.75,18.5 0,13.88" fill="#b9b9b9"/><clipPath id="c187767"><polygon points="0,4.62 8.75,9.25 8.75,18.5 0,13.88"/></clipPath><g clip-path="url(#c187767)"><line x1="0" y1="-9.75" x2="8.75" y2="-18.5" stroke="#4a4a4a" stroke-width="1.57"/><line x1="0" y1="-5.9" x2="8.75" y2="-14.65" stroke="#4a4a4a" stroke-width="1.57"/><line x1="0" y1="-2.05" x2="8.75" y2="-10.8" stroke="#4a4a4a" stroke-width="1.57"/><line x1="0" y1="1.8" x2="8.75" y2="-6.95" stroke="#4a4a4a" stroke-width="1.57"/><line x1="0" y1="5.65" x2="8.75" y2="-3.1" stroke="#4a4a4a" stroke-width="1.57"/><line x1="0" y1="9.5" x2="8.75" y2="0.75" stroke="#4a4a4a" stroke-width="1.57"/><line x1="0" y1="13.35" x2="8.75" y2="4.6" stroke="#4a4a4a" stroke-width="1.57"/><line x1="0" y1="17.2" x2="8.75" y2="8.45" stroke="#4a4a4a" stroke-width="1.57"/><line x1="0" y1="21.05" x2="8.75" y2="12.3" stroke="#4a4a4a" stroke-width="1.57"/><line x1="0" y1="24.9" x2="8.75" y2="16.15" stroke="#4a4a4a" stroke-width="1.57"/><line x1="0" y1="28.75" x2="8.75" y2="20" stroke="#4a4a4a" stroke-width="1.57"/><line x1="0" y1="32.6" x2="8.75" y2="23.85" stroke="#4a4a4a" stroke-width="1.57"/><line x1="0" y1="36.45" x2="8.75" y2="27.7" stroke="#4a4a4a" stroke-width="1.57"/><line x1="0" y1="40.3" x2="8.75" y2="31.55" stroke="#4a4a4a" stroke-width="1.57"/><line x1="0" y1="44.15" x2="8.75" y2="35.4" stroke="#4a4a4a" stroke-width="1.57"/></g><path d="M0 4.62 L8.75 9.25 L17.5 4.62 M8.75 9.25 V18.5" fill="none" stroke="#333333" stroke-width="1.4"/></svg>
<span style="left:637.7px;top:180.8px;font-size:15px;line-height:20px;color:#d2d2d2;letter-spacing:0.81px;">house</span>
<div style="left:511.5px;top:225px;width:71px;height:71px;background:linear-gradient(to bottom,#545454,#4e4e4e);box-shadow:0 1.5px 2.5px rgba(0,0,0,0.5), -1px 0 1.5px rgba(0,0,0,0.25);"></div>
<svg style="left:511.5px;top:225px;" width="71" height="71" viewBox="0 0 71 71"><defs><filter id="bl2" x="-10%" y="-10%" width="120%" height="120%"><feGaussianBlur stdDeviation="0.55"/></filter></defs><g filter="url(#bl2)"><polygon points="15.2,30.4 24.5,16 38.9,22 46.5,29.6 55.7,40.5 52.4,47.3 38.9,53.2 22,51.5 13.2,45.6" fill="#343534"/><polygon points="15.2,30.4 24.5,16 31,22 26,34 17,40 13.2,45.6" fill="#545654"/><polygon points="24.5,16 38.9,22 36,30 31,22" fill="#6a6c6a"/><polygon points="38.9,22 46.5,29.6 55.7,40.5 47,41 38,33" fill="#3a3b3a"/><polygon points="24.5,38.9 32.9,32.9 38.9,37.2 35.5,43.9 27.9,44.8" fill="#1f201f"/><polygon points="13.2,45.6 22,44 30,48 38.9,53.2 22,51.5" fill="#424342"/></g></svg>
<svg style="left:512px;top:301.4px;" width="17.5" height="18.5" viewBox="0 0 17.5 18.5"><polygon points="8.75,0 17.5,4.62 17.5,13.88 8.75,18.5 0,13.88 0,4.62" fill="#7fd0f5"/><polygon points="0,4.62 8.75,9.25 8.75,18.5 0,13.88" fill="#b9b9b9"/><clipPath id="c306520"><polygon points="0,4.62 8.75,9.25 8.75,18.5 0,13.88"/></clipPath><g clip-path="url(#c306520)"><line x1="0" y1="-9.75" x2="8.75" y2="-18.5" stroke="#4a4a4a" stroke-width="1.57"/><line x1="0" y1="-5.9" x2="8.75" y2="-14.65" stroke="#4a4a4a" stroke-width="1.57"/><line x1="0" y1="-2.05" x2="8.75" y2="-10.8" stroke="#4a4a4a" stroke-width="1.57"/><line x1="0" y1="1.8" x2="8.75" y2="-6.95" stroke="#4a4a4a" stroke-width="1.57"/><line x1="0" y1="5.65" x2="8.75" y2="-3.1" stroke="#4a4a4a" stroke-width="1.57"/><line x1="0" y1="9.5" x2="8.75" y2="0.75" stroke="#4a4a4a" stroke-width="1.57"/><line x1="0" y1="13.35" x2="8.75" y2="4.6" stroke="#4a4a4a" stroke-width="1.57"/><line x1="0" y1="17.2" x2="8.75" y2="8.45" stroke="#4a4a4a" stroke-width="1.57"/><line x1="0" y1="21.05" x2="8.75" y2="12.3" stroke="#4a4a4a" stroke-width="1.57"/><line x1="0" y1="24.9" x2="8.75" y2="16.15" stroke="#4a4a4a" stroke-width="1.57"/><line x1="0" y1="28.75" x2="8.75" y2="20" stroke="#4a4a4a" stroke-width="1.57"/><line x1="0" y1="32.6" x2="8.75" y2="23.85" stroke="#4a4a4a" stroke-width="1.57"/><line x1="0" y1="36.45" x2="8.75" y2="27.7" stroke="#4a4a4a" stroke-width="1.57"/><line x1="0" y1="40.3" x2="8.75" y2="31.55" stroke="#4a4a4a" stroke-width="1.57"/><line x1="0" y1="44.15" x2="8.75" y2="35.4" stroke="#4a4a4a" stroke-width="1.57"/></g><path d="M0 4.62 L8.75 9.25 L17.5 4.62 M8.75 9.25 V18.5" fill="none" stroke="#333333" stroke-width="1.4"/></svg>
<span style="left:533px;top:300.6px;font-size:15px;line-height:20px;color:#d2d2d2;letter-spacing:0.81px;">rock_a</span>
<div style="left:613.8px;top:225px;width:71px;height:71px;background:linear-gradient(to bottom,#545454,#4e4e4e);box-shadow:0 1.5px 2.5px rgba(0,0,0,0.5), -1px 0 1.5px rgba(0,0,0,0.25);"></div>
<svg style="left:613.8px;top:225px;" width="71" height="71" viewBox="0 0 71 71"><defs><filter id="bl3" x="-10%" y="-10%" width="120%" height="120%"><feGaussianBlur stdDeviation="0.55"/></filter></defs><g filter="url(#bl3)"><polygon points="21.1,28.7 29.6,17.7 42.2,18.6 45.6,27 40.5,40.5 34.6,53.2 23.6,49 18.1,38.9" fill="#3a3d3c"/><polygon points="21.1,28.7 29.6,17.7 31,30 25,42 18.1,38.9" fill="#5a5d5b"/><polygon points="29.6,17.7 42.2,18.6 45.6,27 37,33 31,30" fill="#494c4b"/><polygon points="31,30 37,33 40.5,40.5 34.6,53.2 30,44" fill="#2b2d2c"/></g></svg>
<svg style="left:613.5px;top:301.4px;" width="17.5" height="18.5" viewBox="0 0 17.5 18.5"><polygon points="8.75,0 17.5,4.62 17.5,13.88 8.75,18.5 0,13.88 0,4.62" fill="#7fd0f5"/><polygon points="0,4.62 8.75,9.25 8.75,18.5 0,13.88" fill="#b9b9b9"/><clipPath id="c307535"><polygon points="0,4.62 8.75,9.25 8.75,18.5 0,13.88"/></clipPath><g clip-path="url(#c307535)"><line x1="0" y1="-9.75" x2="8.75" y2="-18.5" stroke="#4a4a4a" stroke-width="1.57"/><line x1="0" y1="-5.9" x2="8.75" y2="-14.65" stroke="#4a4a4a" stroke-width="1.57"/><line x1="0" y1="-2.05" x2="8.75" y2="-10.8" stroke="#4a4a4a" stroke-width="1.57"/><line x1="0" y1="1.8" x2="8.75" y2="-6.95" stroke="#4a4a4a" stroke-width="1.57"/><line x1="0" y1="5.65" x2="8.75" y2="-3.1" stroke="#4a4a4a" stroke-width="1.57"/><line x1="0" y1="9.5" x2="8.75" y2="0.75" stroke="#4a4a4a" stroke-width="1.57"/><line x1="0" y1="13.35" x2="8.75" y2="4.6" stroke="#4a4a4a" stroke-width="1.57"/><line x1="0" y1="17.2" x2="8.75" y2="8.45" stroke="#4a4a4a" stroke-width="1.57"/><line x1="0" y1="21.05" x2="8.75" y2="12.3" stroke="#4a4a4a" stroke-width="1.57"/><line x1="0" y1="24.9" x2="8.75" y2="16.15" stroke="#4a4a4a" stroke-width="1.57"/><line x1="0" y1="28.75" x2="8.75" y2="20" stroke="#4a4a4a" stroke-width="1.57"/><line x1="0" y1="32.6" x2="8.75" y2="23.85" stroke="#4a4a4a" stroke-width="1.57"/><line x1="0" y1="36.45" x2="8.75" y2="27.7" stroke="#4a4a4a" stroke-width="1.57"/><line x1="0" y1="40.3" x2="8.75" y2="31.55" stroke="#4a4a4a" stroke-width="1.57"/><line x1="0" y1="44.15" x2="8.75" y2="35.4" stroke="#4a4a4a" stroke-width="1.57"/></g><path d="M0 4.62 L8.75 9.25 L17.5 4.62 M8.75 9.25 V18.5" fill="none" stroke="#333333" stroke-width="1.4"/></svg>
<span style="left:634px;top:300.6px;font-size:15px;line-height:20px;color:#d2d2d2;letter-spacing:1.01px;">rock_b</span>
<div style="left:511.5px;top:345px;width:71px;height:71px;background:linear-gradient(to bottom,#545454,#4e4e4e);box-shadow:0 1.5px 2.5px rgba(0,0,0,0.5), -1px 0 1.5px rgba(0,0,0,0.25);"></div>
<svg style="left:511.5px;top:345px;" width="71" height="71" viewBox="0 0 71 71"><defs><filter id="bl4" x="-10%" y="-10%" width="120%" height="120%"><feGaussianBlur stdDeviation="0.55"/></filter></defs><g filter="url(#bl4)"><polygon points="19.4,20.3 31,13.9 45.5,15.9 48.3,27.5 42.6,46.3 31,60.8 22.3,56.5 15,37.6" fill="#2b2c2d"/><polygon points="19.4,20.3 31,13.9 30,30 24,50 22.3,56.5 15,37.6" fill="#494b4b"/><polygon points="31,13.9 45.5,15.9 48.3,27.5 38,26" fill="#3c3e3e"/><polygon points="30,30 38,26 36,44 28,52" fill="#1f2021"/></g></svg>
<svg style="left:512px;top:421.4px;" width="17.5" height="18.5" viewBox="0 0 17.5 18.5"><polygon points="8.75,0 17.5,4.62 17.5,13.88 8.75,18.5 0,13.88 0,4.62" fill="#7fd0f5"/><polygon points="0,4.62 8.75,9.25 8.75,18.5 0,13.88" fill="#b9b9b9"/><clipPath id="c426520"><polygon points="0,4.62 8.75,9.25 8.75,18.5 0,13.88"/></clipPath><g clip-path="url(#c426520)"><line x1="0" y1="-9.75" x2="8.75" y2="-18.5" stroke="#4a4a4a" stroke-width="1.57"/><line x1="0" y1="-5.9" x2="8.75" y2="-14.65" stroke="#4a4a4a" stroke-width="1.57"/><line x1="0" y1="-2.05" x2="8.75" y2="-10.8" stroke="#4a4a4a" stroke-width="1.57"/><line x1="0" y1="1.8" x2="8.75" y2="-6.95" stroke="#4a4a4a" stroke-width="1.57"/><line x1="0" y1="5.65" x2="8.75" y2="-3.1" stroke="#4a4a4a" stroke-width="1.57"/><line x1="0" y1="9.5" x2="8.75" y2="0.75" stroke="#4a4a4a" stroke-width="1.57"/><line x1="0" y1="13.35" x2="8.75" y2="4.6" stroke="#4a4a4a" stroke-width="1.57"/><line x1="0" y1="17.2" x2="8.75" y2="8.45" stroke="#4a4a4a" stroke-width="1.57"/><line x1="0" y1="21.05" x2="8.75" y2="12.3" stroke="#4a4a4a" stroke-width="1.57"/><line x1="0" y1="24.9" x2="8.75" y2="16.15" stroke="#4a4a4a" stroke-width="1.57"/><line x1="0" y1="28.75" x2="8.75" y2="20" stroke="#4a4a4a" stroke-width="1.57"/><line x1="0" y1="32.6" x2="8.75" y2="23.85" stroke="#4a4a4a" stroke-width="1.57"/><line x1="0" y1="36.45" x2="8.75" y2="27.7" stroke="#4a4a4a" stroke-width="1.57"/><line x1="0" y1="40.3" x2="8.75" y2="31.55" stroke="#4a4a4a" stroke-width="1.57"/><line x1="0" y1="44.15" x2="8.75" y2="35.4" stroke="#4a4a4a" stroke-width="1.57"/></g><path d="M0 4.62 L8.75 9.25 L17.5 4.62 M8.75 9.25 V18.5" fill="none" stroke="#333333" stroke-width="1.4"/></svg>
<span style="left:533px;top:420.6px;font-size:15px;line-height:20px;color:#d2d2d2;letter-spacing:0.98px;">rock_c</span>
<div style="left:613.8px;top:345px;width:71px;height:71px;background:linear-gradient(to bottom,#545454,#4e4e4e);box-shadow:0 1.5px 2.5px rgba(0,0,0,0.5), -1px 0 1.5px rgba(0,0,0,0.25);"></div>
<svg style="left:613.8px;top:345px;" width="71" height="71" viewBox="0 0 71 71"><defs><filter id="bl5" x="-10%" y="-10%" width="120%" height="120%"><feGaussianBlur stdDeviation="0.55"/></filter></defs><g filter="url(#bl5)"><polygon points="24.9,25.5 31.3,24.6 42.8,34.7 50.1,47.8 47.2,50.7 35.6,43.4 26.9,31.8" fill="#6a6e6c"/><polygon points="24.9,25.5 31.3,24.6 40,36 44,46 35.6,43.4 26.9,31.8" fill="#7c807e"/></g></svg>
<svg style="left:613.5px;top:421.4px;" width="17.5" height="18.5" viewBox="0 0 17.5 18.5"><polygon points="8.75,0 17.5,4.62 17.5,13.88 8.75,18.5 0,13.88 0,4.62" fill="#7fd0f5"/><polygon points="0,4.62 8.75,9.25 8.75,18.5 0,13.88" fill="#b9b9b9"/><clipPath id="c427535"><polygon points="0,4.62 8.75,9.25 8.75,18.5 0,13.88"/></clipPath><g clip-path="url(#c427535)"><line x1="0" y1="-9.75" x2="8.75" y2="-18.5" stroke="#4a4a4a" stroke-width="1.57"/><line x1="0" y1="-5.9" x2="8.75" y2="-14.65" stroke="#4a4a4a" stroke-width="1.57"/><line x1="0" y1="-2.05" x2="8.75" y2="-10.8" stroke="#4a4a4a" stroke-width="1.57"/><line x1="0" y1="1.8" x2="8.75" y2="-6.95" stroke="#4a4a4a" stroke-width="1.57"/><line x1="0" y1="5.65" x2="8.75" y2="-3.1" stroke="#4a4a4a" stroke-width="1.57"/><line x1="0" y1="9.5" x2="8.75" y2="0.75" stroke="#4a4a4a" stroke-width="1.57"/><line x1="0" y1="13.35" x2="8.75" y2="4.6" stroke="#4a4a4a" stroke-width="1.57"/><line x1="0" y1="17.2" x2="8.75" y2="8.45" stroke="#4a4a4a" stroke-width="1.57"/><line x1="0" y1="21.05" x2="8.75" y2="12.3" stroke="#4a4a4a" stroke-width="1.57"/><line x1="0" y1="24.9" x2="8.75" y2="16.15" stroke="#4a4a4a" stroke-width="1.57"/><line x1="0" y1="28.75" x2="8.75" y2="20" stroke="#4a4a4a" stroke-width="1.57"/><line x1="0" y1="32.6" x2="8.75" y2="23.85" stroke="#4a4a4a" stroke-width="1.57"/><line x1="0" y1="36.45" x2="8.75" y2="27.7" stroke="#4a4a4a" stroke-width="1.57"/><line x1="0" y1="40.3" x2="8.75" y2="31.55" stroke="#4a4a4a" stroke-width="1.57"/><line x1="0" y1="44.15" x2="8.75" y2="35.4" stroke="#4a4a4a" stroke-width="1.57"/></g><path d="M0 4.62 L8.75 9.25 L17.5 4.62 M8.75 9.25 V18.5" fill="none" stroke="#333333" stroke-width="1.4"/></svg>
<span style="left:634px;top:420.6px;font-size:15px;line-height:20px;color:#d2d2d2;letter-spacing:1.01px;">rock_d</span>
<div style="left:511.5px;top:465px;width:71px;height:71px;background:linear-gradient(to bottom,#545454,#4e4e4e);box-shadow:0 1.5px 2.5px rgba(0,0,0,0.5), -1px 0 1.5px rgba(0,0,0,0.25);"></div>
<svg style="left:511.5px;top:465px;" width="71" height="71" viewBox="0 0 71 71"><defs><filter id="bl6" x="-10%" y="-10%" width="120%" height="120%"><feGaussianBlur stdDeviation="0.55"/></filter></defs><g filter="url(#bl6)"><path d="M10.7 27.5 L20 26.5 L27 30.5 L40 28.5 L47.5 27.5 L48.3 30 L38 34.5 L27.5 34 L25.5 45.5 L22.5 45 L22 33.5 L11 31 Z" fill="#585a5a"/><path d="M10.7 27.5 L20 26.5 L23 30.5 L11.5 30.5 Z" fill="#a9acab"/><path d="M36 30 L47.5 27.5 L48.3 30 L38 34.5 Z" fill="#8d908f"/><path d="M22 34 L26.5 34 L25.5 45.5 L22.5 45 Z" fill="#3a3c3c"/><path d="M57 27 L60.5 28.5 L64.3 42 L62 42.8 Z" fill="#3f4141"/></g></svg>
<svg style="left:517px;top:541.6px;" width="17.5" height="18.5" viewBox="0 0 17.5 18.5"><polygon points="8.75,0 17.5,4.62 17.5,13.88 8.75,18.5 0,13.88 0,4.62" fill="#7fd0f5"/><path d="M0 4.62 L8.75 9.25 L17.5 4.62 M8.75 9.25 V18.5" fill="none" stroke="#333333" stroke-width="1.4"/></svg>
<span style="left:537.5px;top:540.8px;font-size:15px;line-height:20px;color:#d2d2d2;letter-spacing:0.8px;">Stage</span>
<div style="left:613.8px;top:465px;width:71px;height:71px;background:linear-gradient(to bottom,#545454,#4e4e4e);box-shadow:0 1.5px 2.5px rgba(0,0,0,0.5), -1px 0 1.5px rgba(0,0,0,0.25);"></div>
<svg style="left:613.8px;top:465px;" width="71" height="71" viewBox="0 0 71 71"><defs><filter id="bl7" x="-10%" y="-10%" width="120%" height="120%"><feGaussianBlur stdDeviation="0.55"/></filter></defs><g filter="url(#bl7)"><line x1="34.7" y1="30" x2="34.7" y2="60.5" stroke="#a6a6a6" stroke-width="1.6"/><ellipse cx="35.53" cy="20.68" rx="2.5" ry="1.03" fill="#3ea445" transform="rotate(104 35.53 20.68)"/><ellipse cx="46.9" cy="34.78" rx="1.71" ry="0.86" fill="#3ea445" transform="rotate(179 46.9 34.78)"/><ellipse cx="44.28" cy="29.87" rx="1.88" ry="1.3" fill="#3ea445" transform="rotate(41 44.28 29.87)"/><ellipse cx="40.86" cy="16.84" rx="2.29" ry="1.17" fill="#3ea445" transform="rotate(11 40.86 16.84)"/><ellipse cx="37.12" cy="40.06" rx="2.34" ry="1.28" fill="#3ea445" transform="rotate(48 37.12 40.06)"/><ellipse cx="47.27" cy="34.4" rx="2.26" ry="1.34" fill="#3ea445" transform="rotate(71 47.27 34.4)"/><ellipse cx="33.32" cy="41.49" rx="2.45" ry="0.77" fill="#2a7d30" transform="rotate(24 33.32 41.49)"/><ellipse cx="42.99" cy="19.78" rx="2.33" ry="1.3" fill="#3ea445" transform="rotate(75 42.99 19.78)"/><ellipse cx="36.43" cy="42.58" rx="2.1" ry="1.11" fill="#1f6a26" transform="rotate(162 36.43 42.58)"/><ellipse cx="47.01" cy="37.45" rx="2.59" ry="1.17" fill="#3ea445" transform="rotate(29 47.01 37.45)"/><ellipse cx="44.81" cy="43.47" rx="2.08" ry="1.2" fill="#1f6a26" transform="rotate(38 44.81 43.47)"/><ellipse cx="36.42" cy="42.51" rx="1.55" ry="1.04" fill="#3ea445" transform="rotate(114 36.42 42.51)"/><ellipse cx="30.18" cy="30.37" rx="1.89" ry="0.81" fill="#2a7d30" transform="rotate(52 30.18 30.37)"/><ellipse cx="44.47" cy="40.41" rx="2.13" ry="1.23" fill="#2a7d30" transform="rotate(68 44.47 40.41)"/><ellipse cx="36.22" cy="34.1" rx="2.01" ry="1.4" fill="#3ea445" transform="rotate(55 36.22 34.1)"/><ellipse cx="35.7" cy="13.14" rx="2.54" ry="1.38" fill="#2a7d30" transform="rotate(52 35.7 13.14)"/><ellipse cx="38.49" cy="21.76" rx="1.78" ry="1.37" fill="#3ea445" transform="rotate(161 38.49 21.76)"/><ellipse cx="33.72" cy="26.36" rx="1.86" ry="1.31" fill="#1f6a26" transform="rotate(122 33.72 26.36)"/><ellipse cx="40.21" cy="14.47" rx="1.73" ry="1.14" fill="#1f6a26" transform="rotate(128 40.21 14.47)"/><ellipse cx="33.72" cy="45.95" rx="2.03" ry="1.08" fill="#3ea445" transform="rotate(2 33.72 45.95)"/><ellipse cx="36.81" cy="27.8" rx="1.85" ry="1.11" fill="#2a7d30" transform="rotate(23 36.81 27.8)"/><ellipse cx="29.75" cy="35.76" rx="2.22" ry="0.95" fill="#3ea445" transform="rotate(127 29.75 35.76)"/><ellipse cx="21.68" cy="39.37" rx="2.55" ry="0.71" fill="#2a7d30" transform="rotate(66 21.68 39.37)"/><ellipse cx="28.74" cy="35.57" rx="1.78" ry="0.95" fill="#1f6a26" transform="rotate(56 28.74 35.57)"/><ellipse cx="37.04" cy="26.02" rx="2.34" ry="0.77" fill="#3ea445" transform="rotate(146 37.04 26.02)"/><ellipse cx="36.74" cy="47.08" rx="1.77" ry="0.86" fill="#2a7d30" transform="rotate(144 36.74 47.08)"/><ellipse cx="28.81" cy="20.72" rx="2.18" ry="0.77" fill="#3ea445" transform="rotate(108 28.81 20.72)"/><ellipse cx="37.19" cy="46.36" rx="1.93" ry="1.3" fill="#2a7d30" transform="rotate(30 37.19 46.36)"/><ellipse cx="38.18" cy="24.74" rx="1.94" ry="0.86" fill="#1f6a26" transform="rotate(21 38.18 24.74)"/><ellipse cx="25.22" cy="32.06" rx="1.62" ry="0.9" fill="#1f6a26" transform="rotate(145 25.22 32.06)"/><ellipse cx="43.71" cy="36.06" rx="2.11" ry="0.99" fill="#3ea445" transform="rotate(93 43.71 36.06)"/><ellipse cx="33.91" cy="43.12" rx="1.75" ry="1.1" fill="#3ea445" transform="rotate(6 33.91 43.12)"/><ellipse cx="26.81" cy="27.73" rx="2.53" ry="1.32" fill="#3ea445" transform="rotate(177 26.81 27.73)"/><ellipse cx="46.9" cy="28.53" rx="1.44" ry="1.02" fill="#2a7d30" transform="rotate(135 46.9 28.53)"/><ellipse cx="47.18" cy="39.71" rx="1.81" ry="0.86" fill="#1f6a26" transform="rotate(12 47.18 39.71)"/><ellipse cx="28.32" cy="34.18" rx="1.45" ry="1.33" fill="#2a7d30" transform="rotate(124 28.32 34.18)"/><ellipse cx="41.42" cy="45.54" rx="2.09" ry="0.71" fill="#3ea445" transform="rotate(134 41.42 45.54)"/><ellipse cx="31.59" cy="17.78" rx="2.03" ry="0.99" fill="#2a7d30" transform="rotate(169 31.59 17.78)"/><ellipse cx="29.98" cy="35.01" rx="2.57" ry="1.08" fill="#3ea445" transform="rotate(146 29.98 35.01)"/><ellipse cx="32.21" cy="12.29" rx="2.04" ry="1.27" fill="#2a7d30" transform="rotate(30 32.21 12.29)"/><ellipse cx="45.37" cy="41.18" rx="2.39" ry="0.71" fill="#2a7d30" transform="rotate(113 45.37 41.18)"/><ellipse cx="24.96" cy="43.54" rx="1.7" ry="1.13" fill="#3ea445" transform="rotate(93 24.96 43.54)"/><ellipse cx="33.26" cy="11.7" rx="2.43" ry="1.24" fill="#2a7d30" transform="rotate(8 33.26 11.7)"/><ellipse cx="34.56" cy="11.63" rx="2.43" ry="0.76" fill="#2a7d30" transform="rotate(90 34.56 11.63)"/><ellipse cx="30.57" cy="23.91" rx="1.86" ry="0.97" fill="#3ea445" transform="rotate(54 30.57 23.91)"/><ellipse cx="44.48" cy="21.82" rx="1.55" ry="1.09" fill="#3ea445" transform="rotate(128 44.48 21.82)"/><ellipse cx="24.22" cy="26.45" rx="1.45" ry="1.02" fill="#2a7d30" transform="rotate(117 24.22 26.45)"/><ellipse cx="38.95" cy="32.48" rx="2.15" ry="1" fill="#2a7d30" transform="rotate(67 38.95 32.48)"/><ellipse cx="40.67" cy="30.83" rx="2.54" ry="0.99" fill="#3ea445" transform="rotate(3 40.67 30.83)"/><ellipse cx="30.59" cy="19.85" rx="1.49" ry="1" fill="#1f6a26" transform="rotate(76 30.59 19.85)"/><ellipse cx="43.66" cy="44.1" rx="2.56" ry="1.09" fill="#3ea445" transform="rotate(156 43.66 44.1)"/><ellipse cx="37.14" cy="15.41" rx="2.35" ry="1.17" fill="#1f6a26" transform="rotate(132 37.14 15.41)"/><ellipse cx="22.77" cy="33.29" rx="2.26" ry="1.03" fill="#1f6a26" transform="rotate(42 22.77 33.29)"/><ellipse cx="35.39" cy="26.78" rx="1.52" ry="1.32" fill="#1f6a26" transform="rotate(32 35.39 26.78)"/><ellipse cx="36.68" cy="9.99" rx="1.43" ry="0.78" fill="#2a7d30" transform="rotate(86 36.68 9.99)"/><ellipse cx="28.58" cy="37.94" rx="2.36" ry="0.73" fill="#3ea445" transform="rotate(138 28.58 37.94)"/><ellipse cx="41.15" cy="31.39" rx="2.07" ry="0.77" fill="#2a7d30" transform="rotate(99 41.15 31.39)"/><ellipse cx="46.3" cy="32.8" rx="2.39" ry="0.87" fill="#2a7d30" transform="rotate(32 46.3 32.8)"/><ellipse cx="36.95" cy="21.19" rx="1.7" ry="1.12" fill="#3ea445" transform="rotate(168 36.95 21.19)"/><ellipse cx="48.73" cy="33.03" rx="2" ry="1.38" fill="#3ea445" transform="rotate(74 48.73 33.03)"/><ellipse cx="25.55" cy="39.69" rx="2.31" ry="1.17" fill="#1f6a26" transform="rotate(93 25.55 39.69)"/><ellipse cx="38.84" cy="30.37" rx="1.6" ry="1.05" fill="#2a7d30" transform="rotate(87 38.84 30.37)"/><ellipse cx="47.47" cy="38.02" rx="2.26" ry="0.83" fill="#1f6a26" transform="rotate(48 47.47 38.02)"/><ellipse cx="36.15" cy="19" rx="2.52" ry="1.3" fill="#3ea445" transform="rotate(96 36.15 19)"/><ellipse cx="39.12" cy="40.77" rx="2.11" ry="1.11" fill="#3ea445" transform="rotate(177 39.12 40.77)"/><ellipse cx="30.88" cy="44.42" rx="1.98" ry="0.97" fill="#3ea445" transform="rotate(31 30.88 44.42)"/><ellipse cx="30.4" cy="25.68" rx="1.9" ry="1.19" fill="#2a7d30" transform="rotate(126 30.4 25.68)"/><ellipse cx="36.09" cy="19.29" rx="1.43" ry="1.39" fill="#1f6a26" transform="rotate(13 36.09 19.29)"/><ellipse cx="38.78" cy="46.31" rx="1.96" ry="0.86" fill="#2a7d30" transform="rotate(42 38.78 46.31)"/><ellipse cx="39.58" cy="38.68" rx="2.42" ry="0.87" fill="#2a7d30" transform="rotate(34 39.58 38.68)"/><ellipse cx="28.52" cy="21.56" rx="2.48" ry="0.88" fill="#2a7d30" transform="rotate(155 28.52 21.56)"/><ellipse cx="33" cy="23.81" rx="1.54" ry="0.88" fill="#2a7d30" transform="rotate(164 33 23.81)"/><ellipse cx="34.37" cy="10.81" rx="1.41" ry="0.93" fill="#3ea445" transform="rotate(78 34.37 10.81)"/><ellipse cx="26.28" cy="30.45" rx="2.29" ry="1.04" fill="#1f6a26" transform="rotate(22 26.28 30.45)"/><ellipse cx="43.29" cy="24.03" rx="2.2" ry="0.78" fill="#2a7d30" transform="rotate(159 43.29 24.03)"/><ellipse cx="27.33" cy="45.05" rx="2.21" ry="0.96" fill="#3ea445" transform="rotate(81 27.33 45.05)"/><ellipse cx="39.64" cy="36.79" rx="1.53" ry="1.36" fill="#3ea445" transform="rotate(60 39.64 36.79)"/><ellipse cx="35.47" cy="33.37" rx="2.01" ry="0.74" fill="#3ea445" transform="rotate(52 35.47 33.37)"/><ellipse cx="41.38" cy="39.03" rx="1.61" ry="1.32" fill="#2a7d30" transform="rotate(117 41.38 39.03)"/><ellipse cx="40.26" cy="15.49" rx="2.5" ry="1.15" fill="#2a7d30" transform="rotate(116 40.26 15.49)"/><ellipse cx="29.41" cy="27.99" rx="1.95" ry="0.92" fill="#2a7d30" transform="rotate(31 29.41 27.99)"/><ellipse cx="36.74" cy="12.69" rx="2.05" ry="1.22" fill="#1f6a26" transform="rotate(64 36.74 12.69)"/><ellipse cx="32.36" cy="21.86" rx="1.45" ry="1.05" fill="#2a7d30" transform="rotate(44 32.36 21.86)"/><ellipse cx="30.88" cy="40.42" rx="2.53" ry="1.01" fill="#3ea445" transform="rotate(145 30.88 40.42)"/><ellipse cx="34.68" cy="12.72" rx="1.58" ry="1.11" fill="#2a7d30" transform="rotate(122 34.68 12.72)"/><ellipse cx="47.03" cy="33.31" rx="1.62" ry="0.83" fill="#2a7d30" transform="rotate(74 47.03 33.31)"/><ellipse cx="43.25" cy="39.55" rx="2.11" ry="0.8" fill="#2a7d30" transform="rotate(71 43.25 39.55)"/><ellipse cx="35.16" cy="18.76" rx="1.61" ry="1.31" fill="#1f6a26" transform="rotate(66 35.16 18.76)"/><ellipse cx="41.99" cy="22.98" rx="2.47" ry="1.36" fill="#3ea445" transform="rotate(68 41.99 22.98)"/><ellipse cx="37.2" cy="32.89" rx="2.57" ry="1.18" fill="#3ea445" transform="rotate(53 37.2 32.89)"/><ellipse cx="34.35" cy="43.45" rx="1.63" ry="1.14" fill="#1f6a26" transform="rotate(19 34.35 43.45)"/><ellipse cx="27.6" cy="39.98" rx="2.03" ry="1.02" fill="#2a7d30" transform="rotate(34 27.6 39.98)"/><ellipse cx="20.51" cy="32.05" rx="2.51" ry="1.36" fill="#1f6a26" transform="rotate(20 20.51 32.05)"/><ellipse cx="37.99" cy="22.58" rx="1.56" ry="1.25" fill="#2a7d30" transform="rotate(112 37.99 22.58)"/><ellipse cx="33.56" cy="11.68" rx="2.01" ry="1.05" fill="#2a7d30" transform="rotate(3 33.56 11.68)"/><ellipse cx="30.7" cy="24.86" rx="2.23" ry="0.79" fill="#3ea445" transform="rotate(154 30.7 24.86)"/><ellipse cx="47.46" cy="34.62" rx="2.29" ry="0.94" fill="#2a7d30" transform="rotate(145 47.46 34.62)"/><ellipse cx="40.54" cy="45.8" rx="2.24" ry="0.85" fill="#3ea445" transform="rotate(56 40.54 45.8)"/><ellipse cx="32.37" cy="41.02" rx="2.25" ry="0.97" fill="#2a7d30" transform="rotate(85 32.37 41.02)"/><ellipse cx="38.01" cy="12.66" rx="2.18" ry="0.91" fill="#2a7d30" transform="rotate(83 38.01 12.66)"/><ellipse cx="32.08" cy="40.02" rx="1.95" ry="0.73" fill="#2a7d30" transform="rotate(46 32.08 40.02)"/><ellipse cx="33.53" cy="43.08" rx="2.12" ry="0.86" fill="#3ea445" transform="rotate(0 33.53 43.08)"/><ellipse cx="39.63" cy="19.43" rx="2.43" ry="1.07" fill="#2a7d30" transform="rotate(28 39.63 19.43)"/><ellipse cx="35.18" cy="9.9" rx="1.6" ry="0.72" fill="#1f6a26" transform="rotate(19 35.18 9.9)"/><ellipse cx="34.55" cy="17.61" rx="2.41" ry="0.98" fill="#2a7d30" transform="rotate(57 34.55 17.61)"/><ellipse cx="36.13" cy="10.6" rx="1.88" ry="0.98" fill="#2a7d30" transform="rotate(4 36.13 10.6)"/><ellipse cx="31.32" cy="46.89" rx="1.87" ry="0.83" fill="#2a7d30" transform="rotate(59 31.32 46.89)"/><ellipse cx="39.85" cy="15.15" rx="1.46" ry="1.21" fill="#1f6a26" transform="rotate(49 39.85 15.15)"/><ellipse cx="33.82" cy="41.05" rx="1.99" ry="1.09" fill="#3ea445" transform="rotate(5 33.82 41.05)"/><ellipse cx="46.12" cy="24.75" rx="1.51" ry="1.18" fill="#3ea445" transform="rotate(174 46.12 24.75)"/><ellipse cx="19.84" cy="34.31" rx="2.22" ry="0.71" fill="#2a7d30" transform="rotate(90 19.84 34.31)"/><ellipse cx="25.72" cy="30.3" rx="2.48" ry="0.84" fill="#1f6a26" transform="rotate(175 25.72 30.3)"/><ellipse cx="43.42" cy="30.12" rx="2.53" ry="0.72" fill="#3ea445" transform="rotate(54 43.42 30.12)"/><ellipse cx="48.02" cy="34.83" rx="2.54" ry="0.83" fill="#2a7d30" transform="rotate(74 48.02 34.83)"/><ellipse cx="36.11" cy="31.25" rx="2.22" ry="1.35" fill="#1f6a26" transform="rotate(31 36.11 31.25)"/><ellipse cx="41.06" cy="39.43" rx="1.83" ry="0.83" fill="#1f6a26" transform="rotate(144 41.06 39.43)"/><ellipse cx="33.19" cy="28.68" rx="1.81" ry="1.27" fill="#3ea445" transform="rotate(91 33.19 28.68)"/><ellipse cx="45.81" cy="39.87" rx="2.54" ry="0.73" fill="#3ea445" transform="rotate(30 45.81 39.87)"/><ellipse cx="43.35" cy="39.83" rx="2.31" ry="1.17" fill="#2a7d30" transform="rotate(17 43.35 39.83)"/><ellipse cx="41.15" cy="20.65" rx="2.45" ry="1.31" fill="#2a7d30" transform="rotate(80 41.15 20.65)"/><path d="M34.7 46 V16 M34.7 42 L27 33 M34.7 38 L42 29 M34.7 32 L29.5 23 M34.7 27 L39 19 M34.7 22 L32 15" stroke="#cfcfcf" stroke-width="0.8" fill="none" opacity="0.75"/><ellipse cx="39.18" cy="43.83" rx="1.07" ry="0.82" fill="#242424"/><ellipse cx="33.73" cy="13.63" rx="1.56" ry="0.66" fill="#242424"/><ellipse cx="22.98" cy="33.2" rx="0.86" ry="0.99" fill="#242424"/><ellipse cx="26.16" cy="21.16" rx="0.92" ry="0.99" fill="#242424"/><ellipse cx="20.06" cy="33.77" rx="0.98" ry="1.18" fill="#242424"/><ellipse cx="35.82" cy="20.32" rx="1.14" ry="1.07" fill="#242424"/><ellipse cx="43.32" cy="34.4" rx="1.23" ry="0.71" fill="#242424"/><ellipse cx="28.03" cy="18.54" rx="1.46" ry="0.67" fill="#242424"/><ellipse cx="37.43" cy="10.92" rx="0.96" ry="1.14" fill="#242424"/><ellipse cx="34.33" cy="14.33" rx="0.98" ry="1.1" fill="#242424"/><ellipse cx="38.92" cy="34.77" rx="1.41" ry="1.12" fill="#242424"/><ellipse cx="37.13" cy="25.26" rx="1.16" ry="0.67" fill="#242424"/><ellipse cx="36.89" cy="41.91" rx="1.45" ry="0.72" fill="#242424"/><ellipse cx="33.59" cy="32.18" rx="1.38" ry="0.65" fill="#242424"/><ellipse cx="34.34" cy="25.26" rx="0.86" ry="0.93" fill="#242424"/><ellipse cx="32.59" cy="38.71" rx="1.32" ry="0.96" fill="#242424"/><ellipse cx="32.06" cy="20.08" rx="1.6" ry="0.8" fill="#242424"/><ellipse cx="23.49" cy="28.37" rx="0.97" ry="0.7" fill="#242424"/><ellipse cx="38.38" cy="44.89" rx="1.5" ry="1.19" fill="#242424"/><ellipse cx="47.55" cy="34.66" rx="1.23" ry="0.85" fill="#242424"/><ellipse cx="40.49" cy="45.41" rx="1.56" ry="0.89" fill="#242424"/><ellipse cx="32.28" cy="39.94" rx="1.6" ry="1.15" fill="#242424"/></g></svg>
<svg style="left:623.9px;top:541.6px;" width="17.5" height="18.5" viewBox="0 0 17.5 18.5"><polygon points="8.75,0 17.5,4.62 17.5,13.88 8.75,18.5 0,13.88 0,4.62" fill="#7fd0f5"/><polygon points="0,4.62 8.75,9.25 8.75,18.5 0,13.88" fill="#b9b9b9"/><clipPath id="c547838"><polygon points="0,4.62 8.75,9.25 8.75,18.5 0,13.88"/></clipPath><g clip-path="url(#c547838)"><line x1="0" y1="-9.75" x2="8.75" y2="-18.5" stroke="#4a4a4a" stroke-width="1.57"/><line x1="0" y1="-5.9" x2="8.75" y2="-14.65" stroke="#4a4a4a" stroke-width="1.57"/><line x1="0" y1="-2.05" x2="8.75" y2="-10.8" stroke="#4a4a4a" stroke-width="1.57"/><line x1="0" y1="1.8" x2="8.75" y2="-6.95" stroke="#4a4a4a" stroke-width="1.57"/><line x1="0" y1="5.65" x2="8.75" y2="-3.1" stroke="#4a4a4a" stroke-width="1.57"/><line x1="0" y1="9.5" x2="8.75" y2="0.75" stroke="#4a4a4a" stroke-width="1.57"/><line x1="0" y1="13.35" x2="8.75" y2="4.6" stroke="#4a4a4a" stroke-width="1.57"/><line x1="0" y1="17.2" x2="8.75" y2="8.45" stroke="#4a4a4a" stroke-width="1.57"/><line x1="0" y1="21.05" x2="8.75" y2="12.3" stroke="#4a4a4a" stroke-width="1.57"/><line x1="0" y1="24.9" x2="8.75" y2="16.15" stroke="#4a4a4a" stroke-width="1.57"/><line x1="0" y1="28.75" x2="8.75" y2="20" stroke="#4a4a4a" stroke-width="1.57"/><line x1="0" y1="32.6" x2="8.75" y2="23.85" stroke="#4a4a4a" stroke-width="1.57"/><line x1="0" y1="36.45" x2="8.75" y2="27.7" stroke="#4a4a4a" stroke-width="1.57"/><line x1="0" y1="40.3" x2="8.75" y2="31.55" stroke="#4a4a4a" stroke-width="1.57"/><line x1="0" y1="44.15" x2="8.75" y2="35.4" stroke="#4a4a4a" stroke-width="1.57"/></g><path d="M0 4.62 L8.75 9.25 L17.5 4.62 M8.75 9.25 V18.5" fill="none" stroke="#333333" stroke-width="1.4"/></svg>
<span style="left:644.6px;top:540.8px;font-size:15px;line-height:20px;color:#d2d2d2;letter-spacing:1.38px;">tree</span>
<div style="left:511.5px;top:585px;width:71px;height:71px;background:linear-gradient(to bottom,#545454,#4e4e4e);box-shadow:0 1.5px 2.5px rgba(0,0,0,0.5), -1px 0 1.5px rgba(0,0,0,0.25);"></div>
<svg style="left:511.5px;top:585px;" width="71" height="71" viewBox="0 0 71 71"><defs><filter id="bl8" x="-10%" y="-10%" width="120%" height="120%"><feGaussianBlur stdDeviation="0.55"/></filter></defs><g filter="url(#bl8)"><line x1="34.7" y1="30" x2="34.7" y2="60.5" stroke="#a6a6a6" stroke-width="1.6"/><ellipse cx="26.8" cy="24.23" rx="1.49" ry="1.08" fill="#b24b2c" transform="rotate(65 26.8 24.23)"/><ellipse cx="34.76" cy="12.1" rx="1.5" ry="0.99" fill="#b24b2c" transform="rotate(43 34.76 12.1)"/><ellipse cx="21.43" cy="32.83" rx="1.55" ry="0.86" fill="#8e3a22" transform="rotate(112 21.43 32.83)"/><ellipse cx="35.81" cy="46.32" rx="1.46" ry="0.85" fill="#d4653c" transform="rotate(100 35.81 46.32)"/><ellipse cx="33.61" cy="15.97" rx="1.54" ry="0.92" fill="#8e3a22" transform="rotate(146 33.61 15.97)"/><ellipse cx="36.01" cy="18.18" rx="1.85" ry="1.08" fill="#b24b2c" transform="rotate(11 36.01 18.18)"/><ellipse cx="32.11" cy="12.19" rx="1.91" ry="0.92" fill="#8e3a22" transform="rotate(105 32.11 12.19)"/><ellipse cx="29.13" cy="29.24" rx="2.24" ry="0.87" fill="#b24b2c" transform="rotate(103 29.13 29.24)"/><ellipse cx="46.14" cy="31.9" rx="1.75" ry="1.39" fill="#d4653c" transform="rotate(21 46.14 31.9)"/><ellipse cx="41.5" cy="27.91" rx="2.52" ry="1" fill="#b24b2c" transform="rotate(173 41.5 27.91)"/><ellipse cx="35.28" cy="13.18" rx="1.81" ry="0.95" fill="#d4653c" transform="rotate(89 35.28 13.18)"/><ellipse cx="23.89" cy="41.36" rx="2.53" ry="1.03" fill="#b24b2c" transform="rotate(119 23.89 41.36)"/><ellipse cx="36.49" cy="12.25" rx="2.59" ry="1.28" fill="#8e3a22" transform="rotate(51 36.49 12.25)"/><ellipse cx="38.95" cy="26.67" rx="2.53" ry="0.95" fill="#b24b2c" transform="rotate(109 38.95 26.67)"/><ellipse cx="26.43" cy="30.74" rx="1.56" ry="0.87" fill="#d4653c" transform="rotate(70 26.43 30.74)"/><ellipse cx="25.86" cy="43.83" rx="1.88" ry="0.89" fill="#d4653c" transform="rotate(24 25.86 43.83)"/><ellipse cx="36.05" cy="28.38" rx="2.58" ry="1.18" fill="#d4653c" transform="rotate(68 36.05 28.38)"/><ellipse cx="27" cy="20.38" rx="1.68" ry="0.86" fill="#b24b2c" transform="rotate(87 27 20.38)"/><ellipse cx="27.59" cy="34.2" rx="1.57" ry="1.07" fill="#b24b2c" transform="rotate(109 27.59 34.2)"/><ellipse cx="26.31" cy="24.02" rx="2.54" ry="1.16" fill="#8e3a22" transform="rotate(133 26.31 24.02)"/><ellipse cx="45.07" cy="29.37" rx="1.87" ry="0.98" fill="#8e3a22" transform="rotate(18 45.07 29.37)"/><ellipse cx="21.78" cy="35.79" rx="2.58" ry="1.01" fill="#b24b2c" transform="rotate(19 21.78 35.79)"/><ellipse cx="22.82" cy="34.61" rx="1.58" ry="0.77" fill="#8e3a22" transform="rotate(65 22.82 34.61)"/><ellipse cx="36.94" cy="10.12" rx="1.85" ry="1.14" fill="#8e3a22" transform="rotate(171 36.94 10.12)"/><ellipse cx="33.93" cy="34.66" rx="2.42" ry="1.4" fill="#b24b2c" transform="rotate(83 33.93 34.66)"/><ellipse cx="22.7" cy="30.38" rx="2.3" ry="1.22" fill="#b24b2c" transform="rotate(86 22.7 30.38)"/><ellipse cx="35.17" cy="37.8" rx="2.54" ry="1.07" fill="#b24b2c" transform="rotate(26 35.17 37.8)"/><ellipse cx="19.97" cy="32.55" rx="1.76" ry="1.15" fill="#8e3a22" transform="rotate(16 19.97 32.55)"/><ellipse cx="35.12" cy="42.97" rx="1.83" ry="0.86" fill="#b24b2c" transform="rotate(97 35.12 42.97)"/><ellipse cx="38.75" cy="31.07" rx="2.37" ry="1.39" fill="#8e3a22" transform="rotate(153 38.75 31.07)"/><ellipse cx="42.55" cy="41.66" rx="1.64" ry="1.04" fill="#b24b2c" transform="rotate(131 42.55 41.66)"/><ellipse cx="36.79" cy="47.67" rx="1.71" ry="1.18" fill="#d4653c" transform="rotate(172 36.79 47.67)"/><ellipse cx="46.76" cy="29.01" rx="2.55" ry="0.96" fill="#d4653c" transform="rotate(39 46.76 29.01)"/><ellipse cx="29.16" cy="20.21" rx="1.98" ry="1.39" fill="#b24b2c" transform="rotate(109 29.16 20.21)"/><ellipse cx="35.93" cy="8.27" rx="2.36" ry="0.76" fill="#d4653c" transform="rotate(118 35.93 8.27)"/><ellipse cx="39.84" cy="45.09" rx="1.97" ry="0.82" fill="#b24b2c" transform="rotate(142 39.84 45.09)"/><ellipse cx="41.62" cy="24.58" rx="1.96" ry="1.22" fill="#d4653c" transform="rotate(15 41.62 24.58)"/><ellipse cx="42.03" cy="17.18" rx="1.58" ry="1.33" fill="#b24b2c" transform="rotate(145 42.03 17.18)"/><ellipse cx="39.33" cy="16.59" rx="2.19" ry="0.95" fill="#d4653c" transform="rotate(98 39.33 16.59)"/><ellipse cx="28.23" cy="15.87" rx="2.03" ry="1.35" fill="#b24b2c" transform="rotate(78 28.23 15.87)"/><ellipse cx="41.57" cy="43.84" rx="1.43" ry="0.85" fill="#b24b2c" transform="rotate(90 41.57 43.84)"/><ellipse cx="30.11" cy="40.24" rx="1.9" ry="0.79" fill="#8e3a22" transform="rotate(163 30.11 40.24)"/><ellipse cx="33.7" cy="25.42" rx="2.38" ry="1.06" fill="#8e3a22" transform="rotate(148 33.7 25.42)"/><ellipse cx="27.09" cy="44.05" rx="2.03" ry="0.71" fill="#b24b2c" transform="rotate(79 27.09 44.05)"/><ellipse cx="26.7" cy="18.29" rx="1.61" ry="1.03" fill="#b24b2c" transform="rotate(130 26.7 18.29)"/><ellipse cx="29.46" cy="33.03" rx="2.04" ry="1.04" fill="#8e3a22" transform="rotate(139 29.46 33.03)"/><ellipse cx="25.72" cy="44.22" rx="1.73" ry="1.24" fill="#b24b2c" transform="rotate(91 25.72 44.22)"/><ellipse cx="42.52" cy="33.22" rx="1.93" ry="1.13" fill="#b24b2c" transform="rotate(90 42.52 33.22)"/><ellipse cx="40.49" cy="31.42" rx="2.01" ry="1.27" fill="#d4653c" transform="rotate(91 40.49 31.42)"/><ellipse cx="35.15" cy="21.1" rx="2.51" ry="1.32" fill="#d4653c" transform="rotate(36 35.15 21.1)"/><ellipse cx="32.4" cy="29.02" rx="1.93" ry="0.75" fill="#d4653c" transform="rotate(43 32.4 29.02)"/><ellipse cx="36.35" cy="12.94" rx="2.48" ry="0.81" fill="#b24b2c" transform="rotate(128 36.35 12.94)"/><ellipse cx="24.3" cy="36.7" rx="2.56" ry="0.85" fill="#b24b2c" transform="rotate(171 24.3 36.7)"/><ellipse cx="34.37" cy="27.15" rx="1.59" ry="1" fill="#b24b2c" transform="rotate(92 34.37 27.15)"/><ellipse cx="27.62" cy="24.84" rx="1.51" ry="0.96" fill="#d4653c" transform="rotate(60 27.62 24.84)"/><ellipse cx="40.39" cy="29.44" rx="1.8" ry="1.14" fill="#d4653c" transform="rotate(92 40.39 29.44)"/><ellipse cx="39.13" cy="12.45" rx="2.57" ry="0.77" fill="#b24b2c" transform="rotate(47 39.13 12.45)"/><ellipse cx="36.72" cy="11.02" rx="2.31" ry="1.27" fill="#d4653c" transform="rotate(152 36.72 11.02)"/><ellipse cx="47.56" cy="37.24" rx="1.58" ry="1.34" fill="#d4653c" transform="rotate(102 47.56 37.24)"/><ellipse cx="23.09" cy="38.08" rx="2.36" ry="0.83" fill="#b24b2c" transform="rotate(161 23.09 38.08)"/><ellipse cx="24.93" cy="21.99" rx="2.36" ry="0.76" fill="#b24b2c" transform="rotate(154 24.93 21.99)"/><ellipse cx="38.07" cy="12.58" rx="1.41" ry="1.4" fill="#d4653c" transform="rotate(75 38.07 12.58)"/><ellipse cx="36.86" cy="45.27" rx="2.03" ry="0.87" fill="#b24b2c" transform="rotate(19 36.86 45.27)"/><ellipse cx="27.96" cy="17.3" rx="2.52" ry="1.14" fill="#b24b2c" transform="rotate(95 27.96 17.3)"/><ellipse cx="33.76" cy="19.3" rx="1.72" ry="1.26" fill="#b24b2c" transform="rotate(179 33.76 19.3)"/><ellipse cx="31.32" cy="10.86" rx="2.06" ry="0.83" fill="#8e3a22" transform="rotate(85 31.32 10.86)"/><ellipse cx="28.45" cy="45.89" rx="2.19" ry="1.08" fill="#d4653c" transform="rotate(159 28.45 45.89)"/><ellipse cx="32.53" cy="47.05" rx="2.58" ry="0.94" fill="#b24b2c" transform="rotate(149 32.53 47.05)"/><ellipse cx="38.52" cy="38.3" rx="2.59" ry="1.39" fill="#d4653c" transform="rotate(150 38.52 38.3)"/><ellipse cx="35.3" cy="9.33" rx="1.92" ry="0.74" fill="#d4653c" transform="rotate(119 35.3 9.33)"/><ellipse cx="34.85" cy="26.48" rx="2.12" ry="1.18" fill="#d4653c" transform="rotate(8 34.85 26.48)"/><ellipse cx="30.95" cy="18.39" rx="1.72" ry="1.37" fill="#b24b2c" transform="rotate(175 30.95 18.39)"/><ellipse cx="26.7" cy="32.69" rx="1.66" ry="0.83" fill="#d4653c" transform="rotate(60 26.7 32.69)"/><ellipse cx="32.38" cy="13.51" rx="1.7" ry="1.24" fill="#b24b2c" transform="rotate(16 32.38 13.51)"/><ellipse cx="26.1" cy="42.03" rx="1.45" ry="0.72" fill="#8e3a22" transform="rotate(54 26.1 42.03)"/><ellipse cx="36.29" cy="20.46" rx="2.42" ry="0.81" fill="#8e3a22" transform="rotate(160 36.29 20.46)"/><ellipse cx="37.17" cy="40.93" rx="2.26" ry="1.05" fill="#d4653c" transform="rotate(51 37.17 40.93)"/><ellipse cx="24.14" cy="35.24" rx="2.15" ry="1.21" fill="#8e3a22" transform="rotate(146 24.14 35.24)"/><ellipse cx="35.03" cy="16.26" rx="2.08" ry="1.27" fill="#8e3a22" transform="rotate(2 35.03 16.26)"/><ellipse cx="43.22" cy="37.6" rx="1.5" ry="0.73" fill="#b24b2c" transform="rotate(114 43.22 37.6)"/><ellipse cx="33.11" cy="46.7" rx="2.07" ry="1.14" fill="#d4653c" transform="rotate(112 33.11 46.7)"/><ellipse cx="34.39" cy="37.4" rx="1.95" ry="0.75" fill="#b24b2c" transform="rotate(167 34.39 37.4)"/><ellipse cx="26.87" cy="44.7" rx="1.48" ry="1.22" fill="#8e3a22" transform="rotate(45 26.87 44.7)"/><ellipse cx="32.39" cy="13.01" rx="1.68" ry="1.15" fill="#b24b2c" transform="rotate(82 32.39 13.01)"/><ellipse cx="25.11" cy="42.98" rx="2.32" ry="1.13" fill="#d4653c" transform="rotate(115 25.11 42.98)"/><ellipse cx="31.16" cy="13.17" rx="2.18" ry="1.19" fill="#d4653c" transform="rotate(111 31.16 13.17)"/><ellipse cx="34.46" cy="15.99" rx="1.72" ry="1.17" fill="#d4653c" transform="rotate(124 34.46 15.99)"/><ellipse cx="28.67" cy="37.23" rx="1.74" ry="1.03" fill="#8e3a22" transform="rotate(138 28.67 37.23)"/><ellipse cx="35" cy="47.79" rx="2.57" ry="1.36" fill="#d4653c" transform="rotate(3 35 47.79)"/><ellipse cx="43.67" cy="29.45" rx="2.59" ry="0.97" fill="#d4653c" transform="rotate(164 43.67 29.45)"/><ellipse cx="27.77" cy="45.76" rx="1.57" ry="1.07" fill="#b24b2c" transform="rotate(171 27.77 45.76)"/><ellipse cx="39" cy="15.95" rx="1.74" ry="0.78" fill="#8e3a22" transform="rotate(65 39 15.95)"/><ellipse cx="45.79" cy="30.9" rx="1.43" ry="0.7" fill="#d4653c" transform="rotate(88 45.79 30.9)"/><ellipse cx="29.21" cy="29.15" rx="1.9" ry="0.96" fill="#b24b2c" transform="rotate(21 29.21 29.15)"/><ellipse cx="30.67" cy="24.53" rx="2.41" ry="0.78" fill="#d4653c" transform="rotate(166 30.67 24.53)"/><ellipse cx="45.93" cy="38.52" rx="1.7" ry="0.75" fill="#d4653c" transform="rotate(70 45.93 38.52)"/><ellipse cx="25.73" cy="43.78" rx="2.31" ry="1.3" fill="#d4653c" transform="rotate(50 25.73 43.78)"/><ellipse cx="36.03" cy="11.74" rx="1.7" ry="0.89" fill="#b24b2c" transform="rotate(91 36.03 11.74)"/><ellipse cx="32.61" cy="18.59" rx="2.46" ry="1.27" fill="#d4653c" transform="rotate(113 32.61 18.59)"/><ellipse cx="42.59" cy="45.2" rx="1.64" ry="0.76" fill="#8e3a22" transform="rotate(168 42.59 45.2)"/><ellipse cx="37.71" cy="27.64" rx="2.17" ry="0.9" fill="#b24b2c" transform="rotate(8 37.71 27.64)"/><ellipse cx="28.49" cy="45.64" rx="1.9" ry="0.9" fill="#d4653c" transform="rotate(46 28.49 45.64)"/><ellipse cx="38.86" cy="39.39" rx="2.19" ry="0.91" fill="#d4653c" transform="rotate(100 38.86 39.39)"/><ellipse cx="26.21" cy="27" rx="1.49" ry="1.05" fill="#b24b2c" transform="rotate(146 26.21 27)"/><ellipse cx="33.29" cy="32.81" rx="2.6" ry="1.01" fill="#d4653c" transform="rotate(25 33.29 32.81)"/><ellipse cx="27.91" cy="18.7" rx="2.07" ry="0.92" fill="#d4653c" transform="rotate(66 27.91 18.7)"/><ellipse cx="27.4" cy="41.77" rx="2.3" ry="0.99" fill="#b24b2c" transform="rotate(74 27.4 41.77)"/><ellipse cx="30.95" cy="31.86" rx="2.3" ry="1.05" fill="#d4653c" transform="rotate(103 30.95 31.86)"/><ellipse cx="39.21" cy="25.67" rx="2.16" ry="1.3" fill="#8e3a22" transform="rotate(38 39.21 25.67)"/><ellipse cx="29.59" cy="22.08" rx="2.17" ry="1" fill="#d4653c" transform="rotate(56 29.59 22.08)"/><ellipse cx="46.07" cy="41.94" rx="1.44" ry="1.2" fill="#b24b2c" transform="rotate(161 46.07 41.94)"/><ellipse cx="37.19" cy="29.99" rx="1.49" ry="1.35" fill="#b24b2c" transform="rotate(167 37.19 29.99)"/><ellipse cx="33.73" cy="31.99" rx="1.7" ry="0.78" fill="#d4653c" transform="rotate(27 33.73 31.99)"/><ellipse cx="40.23" cy="31.79" rx="1.5" ry="1.24" fill="#d4653c" transform="rotate(0 40.23 31.79)"/><ellipse cx="35.6" cy="15.61" rx="2.17" ry="0.91" fill="#b24b2c" transform="rotate(23 35.6 15.61)"/><ellipse cx="37.35" cy="21.27" rx="1.52" ry="0.91" fill="#b24b2c" transform="rotate(169 37.35 21.27)"/><ellipse cx="30.74" cy="18.67" rx="1.4" ry="1.08" fill="#8e3a22" transform="rotate(179 30.74 18.67)"/><ellipse cx="30.91" cy="22.39" rx="1.97" ry="0.86" fill="#b24b2c" transform="rotate(44 30.91 22.39)"/><ellipse cx="37.31" cy="46.73" rx="1.47" ry="0.84" fill="#d4653c" transform="rotate(159 37.31 46.73)"/><ellipse cx="22.41" cy="36.24" rx="2.2" ry="1.35" fill="#b24b2c" transform="rotate(40 22.41 36.24)"/><path d="M34.7 46 V16 M34.7 42 L27 33 M34.7 38 L42 29 M34.7 32 L29.5 23 M34.7 27 L39 19 M34.7 22 L32 15" stroke="#cfcfcf" stroke-width="0.8" fill="none" opacity="0.75"/><ellipse cx="33.6" cy="11.55" rx="1.14" ry="1.01" fill="#242424"/><ellipse cx="39.71" cy="19.41" rx="1.39" ry="0.9" fill="#242424"/><ellipse cx="42.8" cy="19.7" rx="1.05" ry="1.09" fill="#242424"/><ellipse cx="29.56" cy="20.76" rx="1.41" ry="0.78" fill="#242424"/><ellipse cx="34.64" cy="45.53" rx="0.95" ry="0.73" fill="#242424"/><ellipse cx="39.07" cy="27.88" rx="1.56" ry="0.69" fill="#242424"/><ellipse cx="27.38" cy="27.02" rx="1.58" ry="0.69" fill="#242424"/><ellipse cx="31.08" cy="12.56" rx="1.11" ry="1.14" fill="#242424"/><ellipse cx="39.41" cy="43.42" rx="1.6" ry="1.16" fill="#242424"/><ellipse cx="27.51" cy="24.62" rx="1.55" ry="1.05" fill="#242424"/><ellipse cx="35.78" cy="11.41" rx="1.1" ry="0.82" fill="#242424"/><ellipse cx="27.11" cy="24.72" rx="0.8" ry="0.77" fill="#242424"/><ellipse cx="45.53" cy="25.46" rx="0.9" ry="1.18" fill="#242424"/><ellipse cx="32.21" cy="19.8" rx="1.46" ry="1.09" fill="#242424"/><ellipse cx="22.52" cy="28.43" rx="1.18" ry="0.82" fill="#242424"/><ellipse cx="29.37" cy="44.53" rx="1.09" ry="1.14" fill="#242424"/><ellipse cx="34.13" cy="11.32" rx="1.45" ry="1.06" fill="#242424"/><ellipse cx="31.29" cy="11.93" rx="0.85" ry="1.15" fill="#242424"/><ellipse cx="39.57" cy="21.82" rx="1.52" ry="0.8" fill="#242424"/><ellipse cx="44.03" cy="22.42" rx="1.29" ry="0.76" fill="#242424"/><ellipse cx="29.59" cy="38.11" rx="1.02" ry="0.6" fill="#242424"/><ellipse cx="45.81" cy="39.37" rx="1.31" ry="1.17" fill="#242424"/></g></svg>
<svg style="left:511px;top:661.4px;" width="17.5" height="18.5" viewBox="0 0 17.5 18.5"><polygon points="8.75,0 17.5,4.62 17.5,13.88 8.75,18.5 0,13.88 0,4.62" fill="#7fd0f5"/><polygon points="0,4.62 8.75,9.25 8.75,18.5 0,13.88" fill="#b9b9b9"/><clipPath id="c666510"><polygon points="0,4.62 8.75,9.25 8.75,18.5 0,13.88"/></clipPath><g clip-path="url(#c666510)"><line x1="0" y1="-9.75" x2="8.75" y2="-18.5" stroke="#4a4a4a" stroke-width="1.57"/><line x1="0" y1="-5.9" x2="8.75" y2="-14.65" stroke="#4a4a4a" stroke-width="1.57"/><line x1="0" y1="-2.05" x2="8.75" y2="-10.8" stroke="#4a4a4a" stroke-width="1.57"/><line x1="0" y1="1.8" x2="8.75" y2="-6.95" stroke="#4a4a4a" stroke-width="1.57"/><line x1="0" y1="5.65" x2="8.75" y2="-3.1" stroke="#4a4a4a" stroke-width="1.57"/><line x1="0" y1="9.5" x2="8.75" y2="0.75" stroke="#4a4a4a" stroke-width="1.57"/><line x1="0" y1="13.35" x2="8.75" y2="4.6" stroke="#4a4a4a" stroke-width="1.57"/><line x1="0" y1="17.2" x2="8.75" y2="8.45" stroke="#4a4a4a" stroke-width="1.57"/><line x1="0" y1="21.05" x2="8.75" y2="12.3" stroke="#4a4a4a" stroke-width="1.57"/><line x1="0" y1="24.9" x2="8.75" y2="16.15" stroke="#4a4a4a" stroke-width="1.57"/><line x1="0" y1="28.75" x2="8.75" y2="20" stroke="#4a4a4a" stroke-width="1.57"/><line x1="0" y1="32.6" x2="8.75" y2="23.85" stroke="#4a4a4a" stroke-width="1.57"/><line x1="0" y1="36.45" x2="8.75" y2="27.7" stroke="#4a4a4a" stroke-width="1.57"/><line x1="0" y1="40.3" x2="8.75" y2="31.55" stroke="#4a4a4a" stroke-width="1.57"/><line x1="0" y1="44.15" x2="8.75" y2="35.4" stroke="#4a4a4a" stroke-width="1.57"/></g><path d="M0 4.62 L8.75 9.25 L17.5 4.62 M8.75 9.25 V18.5" fill="none" stroke="#333333" stroke-width="1.4"/></svg>
<span style="left:531.7px;top:660.6px;font-size:15px;line-height:20px;color:#d2d2d2;letter-spacing:1.18px;">treered</span>
<div style="left:613.8px;top:585px;width:71px;height:71px;background:linear-gradient(to bottom,#545454,#4e4e4e);box-shadow:0 1.5px 2.5px rgba(0,0,0,0.5), -1px 0 1.5px rgba(0,0,0,0.25);"></div>
<svg style="left:613.8px;top:585px;" width="71" height="71" viewBox="0 0 71 71"><defs><filter id="bl9" x="-10%" y="-10%" width="120%" height="120%"><feGaussianBlur stdDeviation="0.55"/></filter></defs><g filter="url(#bl9)"><line x1="34.7" y1="30" x2="34.7" y2="60.5" stroke="#a6a6a6" stroke-width="1.6"/><ellipse cx="36.36" cy="29.21" rx="1.94" ry="1.3" fill="#c6c840" transform="rotate(34 36.36 29.21)"/><ellipse cx="34.1" cy="41.59" rx="2.35" ry="0.77" fill="#7f8423" transform="rotate(54 34.1 41.59)"/><ellipse cx="38.08" cy="13.86" rx="2.11" ry="0.98" fill="#9ea12b" transform="rotate(81 38.08 13.86)"/><ellipse cx="38.79" cy="39.4" rx="1.42" ry="1.07" fill="#7f8423" transform="rotate(10 38.79 39.4)"/><ellipse cx="30.45" cy="18.6" rx="2.33" ry="0.93" fill="#9ea12b" transform="rotate(106 30.45 18.6)"/><ellipse cx="30.24" cy="18.83" rx="2" ry="1.16" fill="#c6c840" transform="rotate(82 30.24 18.83)"/><ellipse cx="44.97" cy="22.37" rx="2.25" ry="0.92" fill="#9ea12b" transform="rotate(41 44.97 22.37)"/><ellipse cx="25.62" cy="22.82" rx="1.88" ry="1.29" fill="#9ea12b" transform="rotate(69 25.62 22.82)"/><ellipse cx="39.25" cy="46.65" rx="1.66" ry="1.35" fill="#9ea12b" transform="rotate(9 39.25 46.65)"/><ellipse cx="39.87" cy="26.27" rx="1.49" ry="1.14" fill="#c6c840" transform="rotate(140 39.87 26.27)"/><ellipse cx="26.33" cy="22.02" rx="1.42" ry="0.99" fill="#c6c840" transform="rotate(166 26.33 22.02)"/><ellipse cx="37.5" cy="16.04" rx="1.47" ry="1.26" fill="#9ea12b" transform="rotate(31 37.5 16.04)"/><ellipse cx="33.12" cy="33.13" rx="2.58" ry="1.24" fill="#9ea12b" transform="rotate(75 33.12 33.13)"/><ellipse cx="32.06" cy="26.59" rx="1.4" ry="1.31" fill="#9ea12b" transform="rotate(175 32.06 26.59)"/><ellipse cx="49.61" cy="34.32" rx="1.65" ry="0.98" fill="#9ea12b" transform="rotate(153 49.61 34.32)"/><ellipse cx="22.94" cy="36.05" rx="1.66" ry="0.88" fill="#9ea12b" transform="rotate(139 22.94 36.05)"/><ellipse cx="30.05" cy="24.43" rx="1.49" ry="0.85" fill="#9ea12b" transform="rotate(114 30.05 24.43)"/><ellipse cx="34.05" cy="9.43" rx="1.94" ry="1.37" fill="#7f8423" transform="rotate(87 34.05 9.43)"/><ellipse cx="45.71" cy="33.68" rx="2.15" ry="0.92" fill="#9ea12b" transform="rotate(41 45.71 33.68)"/><ellipse cx="41.42" cy="34.95" rx="2.29" ry="1.36" fill="#9ea12b" transform="rotate(35 41.42 34.95)"/><ellipse cx="40.09" cy="46.4" rx="1.49" ry="0.73" fill="#7f8423" transform="rotate(19 40.09 46.4)"/><ellipse cx="27.35" cy="31.43" rx="1.71" ry="1.28" fill="#c6c840" transform="rotate(107 27.35 31.43)"/><ellipse cx="27.78" cy="23" rx="1.55" ry="1.04" fill="#9ea12b" transform="rotate(117 27.78 23)"/><ellipse cx="22.03" cy="35.14" rx="2.5" ry="0.84" fill="#9ea12b" transform="rotate(2 22.03 35.14)"/><ellipse cx="33.6" cy="22" rx="1.46" ry="0.9" fill="#9ea12b" transform="rotate(95 33.6 22)"/><ellipse cx="30.29" cy="47.14" rx="2.47" ry="1.39" fill="#9ea12b" transform="rotate(118 30.29 47.14)"/><ellipse cx="37.11" cy="37.77" rx="2.11" ry="1.35" fill="#9ea12b" transform="rotate(85 37.11 37.77)"/><ellipse cx="30.18" cy="25.57" rx="1.43" ry="1.15" fill="#9ea12b" transform="rotate(86 30.18 25.57)"/><ellipse cx="29.72" cy="39.11" rx="1.49" ry="1.08" fill="#9ea12b" transform="rotate(132 29.72 39.11)"/><ellipse cx="39.2" cy="44.77" rx="2.35" ry="1.34" fill="#9ea12b" transform="rotate(63 39.2 44.77)"/><ellipse cx="46.18" cy="37.56" rx="2.53" ry="0.72" fill="#c6c840" transform="rotate(89 46.18 37.56)"/><ellipse cx="35.49" cy="9.35" rx="2.1" ry="1.13" fill="#c6c840" transform="rotate(14 35.49 9.35)"/><ellipse cx="49.23" cy="35.97" rx="2.27" ry="0.97" fill="#c6c840" transform="rotate(132 49.23 35.97)"/><ellipse cx="32.91" cy="33.9" rx="1.5" ry="1.23" fill="#7f8423" transform="rotate(5 32.91 33.9)"/><ellipse cx="34.13" cy="34.63" rx="2.55" ry="0.78" fill="#9ea12b" transform="rotate(140 34.13 34.63)"/><ellipse cx="34.3" cy="36.69" rx="1.84" ry="0.8" fill="#9ea12b" transform="rotate(110 34.3 36.69)"/><ellipse cx="42.38" cy="31.65" rx="2.19" ry="1.01" fill="#c6c840" transform="rotate(160 42.38 31.65)"/><ellipse cx="38.48" cy="24.36" rx="2.16" ry="1.26" fill="#9ea12b" transform="rotate(135 38.48 24.36)"/><ellipse cx="29.84" cy="19.05" rx="2.1" ry="0.92" fill="#9ea12b" transform="rotate(24 29.84 19.05)"/><ellipse cx="44.63" cy="30.84" rx="2.25" ry="1.37" fill="#9ea12b" transform="rotate(49 44.63 30.84)"/><ellipse cx="33.94" cy="17.65" rx="2.51" ry="1.28" fill="#c6c840" transform="rotate(68 33.94 17.65)"/><ellipse cx="39.92" cy="31.71" rx="1.94" ry="0.75" fill="#7f8423" transform="rotate(5 39.92 31.71)"/><ellipse cx="25.08" cy="43.88" rx="2.08" ry="0.92" fill="#c6c840" transform="rotate(142 25.08 43.88)"/><ellipse cx="32.75" cy="9.69" rx="1.63" ry="1.24" fill="#c6c840" transform="rotate(47 32.75 9.69)"/><ellipse cx="42.36" cy="40.76" rx="1.94" ry="1.14" fill="#9ea12b" transform="rotate(117 42.36 40.76)"/><ellipse cx="45.98" cy="41.71" rx="1.64" ry="1.03" fill="#9ea12b" transform="rotate(32 45.98 41.71)"/><ellipse cx="34.58" cy="9.07" rx="1.61" ry="0.89" fill="#9ea12b" transform="rotate(62 34.58 9.07)"/><ellipse cx="35.28" cy="37.98" rx="2.6" ry="0.81" fill="#7f8423" transform="rotate(152 35.28 37.98)"/><ellipse cx="26.89" cy="38.06" rx="2.52" ry="1.21" fill="#c6c840" transform="rotate(23 26.89 38.06)"/><ellipse cx="38.19" cy="29.25" rx="1.85" ry="1.1" fill="#9ea12b" transform="rotate(158 38.19 29.25)"/><ellipse cx="45.84" cy="41.35" rx="1.79" ry="1.39" fill="#c6c840" transform="rotate(17 45.84 41.35)"/><ellipse cx="41.09" cy="43.66" rx="1.66" ry="1.33" fill="#9ea12b" transform="rotate(176 41.09 43.66)"/><ellipse cx="35.07" cy="47.27" rx="1.71" ry="1.2" fill="#c6c840" transform="rotate(2 35.07 47.27)"/><ellipse cx="20.93" cy="31.15" rx="2.06" ry="1.24" fill="#c6c840" transform="rotate(87 20.93 31.15)"/><ellipse cx="36.64" cy="10.32" rx="1.91" ry="0.72" fill="#9ea12b" transform="rotate(95 36.64 10.32)"/><ellipse cx="46.6" cy="37.61" rx="1.58" ry="1.06" fill="#c6c840" transform="rotate(130 46.6 37.61)"/><ellipse cx="39.05" cy="42.79" rx="2.09" ry="1.18" fill="#c6c840" transform="rotate(136 39.05 42.79)"/><ellipse cx="36.3" cy="28.72" rx="2.17" ry="1.07" fill="#7f8423" transform="rotate(151 36.3 28.72)"/><ellipse cx="29.04" cy="33.15" rx="2.55" ry="1.31" fill="#c6c840" transform="rotate(109 29.04 33.15)"/><ellipse cx="26.88" cy="23.45" rx="2.03" ry="1.1" fill="#7f8423" transform="rotate(36 26.88 23.45)"/><ellipse cx="34.8" cy="32.28" rx="1.85" ry="1.08" fill="#7f8423" transform="rotate(7 34.8 32.28)"/><ellipse cx="35.47" cy="45.33" rx="1.55" ry="0.77" fill="#7f8423" transform="rotate(30 35.47 45.33)"/><ellipse cx="34.03" cy="45.77" rx="1.72" ry="1.03" fill="#c6c840" transform="rotate(22 34.03 45.77)"/><ellipse cx="43.25" cy="28.5" rx="2.03" ry="0.78" fill="#c6c840" transform="rotate(75 43.25 28.5)"/><ellipse cx="33.18" cy="10.38" rx="1.44" ry="0.81" fill="#9ea12b" transform="rotate(2 33.18 10.38)"/><ellipse cx="39.37" cy="22.62" rx="2.14" ry="0.77" fill="#9ea12b" transform="rotate(131 39.37 22.62)"/><ellipse cx="34.83" cy="15.47" rx="2.26" ry="1.19" fill="#c6c840" transform="rotate(158 34.83 15.47)"/><ellipse cx="35.47" cy="9.97" rx="2.14" ry="1.08" fill="#7f8423" transform="rotate(155 35.47 9.97)"/><ellipse cx="26.02" cy="32.22" rx="2.42" ry="1.13" fill="#9ea12b" transform="rotate(154 26.02 32.22)"/><ellipse cx="39.17" cy="20.46" rx="2.48" ry="0.92" fill="#c6c840" transform="rotate(56 39.17 20.46)"/><ellipse cx="29.9" cy="45.51" rx="2.47" ry="0.79" fill="#9ea12b" transform="rotate(43 29.9 45.51)"/><ellipse cx="28.06" cy="38.98" rx="1.92" ry="1.36" fill="#9ea12b" transform="rotate(97 28.06 38.98)"/><ellipse cx="26.27" cy="38.24" rx="1.52" ry="1.1" fill="#9ea12b" transform="rotate(64 26.27 38.24)"/><ellipse cx="31.38" cy="42.16" rx="2.16" ry="0.94" fill="#7f8423" transform="rotate(179 31.38 42.16)"/><ellipse cx="41.77" cy="42.56" rx="1.53" ry="0.73" fill="#c6c840" transform="rotate(99 41.77 42.56)"/><ellipse cx="36.77" cy="31.52" rx="1.63" ry="0.78" fill="#9ea12b" transform="rotate(31 36.77 31.52)"/><ellipse cx="31.49" cy="17.14" rx="2.1" ry="0.79" fill="#9ea12b" transform="rotate(122 31.49 17.14)"/><ellipse cx="30.64" cy="13.18" rx="1.96" ry="1.06" fill="#c6c840" transform="rotate(77 30.64 13.18)"/><ellipse cx="20.16" cy="34.61" rx="2.41" ry="0.83" fill="#9ea12b" transform="rotate(81 20.16 34.61)"/><ellipse cx="32.12" cy="39.41" rx="2.13" ry="0.77" fill="#9ea12b" transform="rotate(142 32.12 39.41)"/><ellipse cx="25.31" cy="24.22" rx="2.08" ry="0.83" fill="#c6c840" transform="rotate(105 25.31 24.22)"/><ellipse cx="40.83" cy="24.91" rx="2.49" ry="1.22" fill="#c6c840" transform="rotate(140 40.83 24.91)"/><ellipse cx="32.41" cy="41.95" rx="2.46" ry="1.19" fill="#c6c840" transform="rotate(138 32.41 41.95)"/><ellipse cx="32.22" cy="40.29" rx="1.48" ry="0.94" fill="#9ea12b" transform="rotate(84 32.22 40.29)"/><ellipse cx="34.07" cy="9.05" rx="1.46" ry="0.89" fill="#7f8423" transform="rotate(173 34.07 9.05)"/><ellipse cx="28.58" cy="23.22" rx="2.08" ry="1.07" fill="#c6c840" transform="rotate(70 28.58 23.22)"/><ellipse cx="34.96" cy="48" rx="2.31" ry="1.39" fill="#9ea12b" transform="rotate(4 34.96 48)"/><ellipse cx="41.8" cy="35.13" rx="1.93" ry="1.05" fill="#c6c840" transform="rotate(137 41.8 35.13)"/><ellipse cx="20.35" cy="36.27" rx="1.7" ry="1.33" fill="#c6c840" transform="rotate(99 20.35 36.27)"/><ellipse cx="48.65" cy="31.26" rx="2.42" ry="0.77" fill="#7f8423" transform="rotate(79 48.65 31.26)"/><ellipse cx="36.15" cy="36.15" rx="1.86" ry="1.36" fill="#9ea12b" transform="rotate(69 36.15 36.15)"/><ellipse cx="38.72" cy="47.04" rx="2.13" ry="0.74" fill="#7f8423" transform="rotate(170 38.72 47.04)"/><ellipse cx="35.41" cy="28.01" rx="1.77" ry="1.07" fill="#7f8423" transform="rotate(86 35.41 28.01)"/><ellipse cx="43.4" cy="22.02" rx="1.43" ry="1.24" fill="#c6c840" transform="rotate(105 43.4 22.02)"/><ellipse cx="32.01" cy="35.74" rx="1.46" ry="0.92" fill="#c6c840" transform="rotate(71 32.01 35.74)"/><ellipse cx="41.39" cy="33.93" rx="1.49" ry="1.33" fill="#c6c840" transform="rotate(77 41.39 33.93)"/><ellipse cx="48.3" cy="30.15" rx="1.45" ry="0.77" fill="#9ea12b" transform="rotate(145 48.3 30.15)"/><ellipse cx="28.21" cy="45.08" rx="2.12" ry="0.78" fill="#9ea12b" transform="rotate(112 28.21 45.08)"/><ellipse cx="26.43" cy="29.33" rx="1.83" ry="0.81" fill="#9ea12b" transform="rotate(65 26.43 29.33)"/><ellipse cx="33.55" cy="16.29" rx="1.71" ry="1.11" fill="#7f8423" transform="rotate(75 33.55 16.29)"/><ellipse cx="35.5" cy="40.72" rx="2.54" ry="1.21" fill="#9ea12b" transform="rotate(42 35.5 40.72)"/><ellipse cx="39.54" cy="15.03" rx="2.15" ry="0.95" fill="#7f8423" transform="rotate(48 39.54 15.03)"/><ellipse cx="36.56" cy="37.56" rx="1.63" ry="0.9" fill="#7f8423" transform="rotate(43 36.56 37.56)"/><ellipse cx="34.73" cy="46.45" rx="2.45" ry="0.73" fill="#9ea12b" transform="rotate(10 34.73 46.45)"/><ellipse cx="33.18" cy="22.07" rx="1.45" ry="0.86" fill="#7f8423" transform="rotate(50 33.18 22.07)"/><ellipse cx="45.71" cy="39.97" rx="2.06" ry="1.14" fill="#9ea12b" transform="rotate(67 45.71 39.97)"/><ellipse cx="26.37" cy="30.18" rx="1.99" ry="0.79" fill="#c6c840" transform="rotate(156 26.37 30.18)"/><ellipse cx="33.39" cy="41.54" rx="2.41" ry="1.24" fill="#7f8423" transform="rotate(79 33.39 41.54)"/><ellipse cx="31.74" cy="39.69" rx="1.84" ry="1.16" fill="#9ea12b" transform="rotate(178 31.74 39.69)"/><ellipse cx="35.8" cy="24.29" rx="1.91" ry="0.96" fill="#9ea12b" transform="rotate(17 35.8 24.29)"/><ellipse cx="25.92" cy="43.95" rx="1.92" ry="1.1" fill="#9ea12b" transform="rotate(146 25.92 43.95)"/><ellipse cx="43.83" cy="29.62" rx="1.49" ry="0.85" fill="#9ea12b" transform="rotate(119 43.83 29.62)"/><ellipse cx="32.67" cy="13.39" rx="1.74" ry="0.8" fill="#c6c840" transform="rotate(64 32.67 13.39)"/><ellipse cx="31.01" cy="38.96" rx="1.79" ry="1.01" fill="#9ea12b" transform="rotate(107 31.01 38.96)"/><ellipse cx="38.22" cy="44.84" rx="1.93" ry="1.26" fill="#c6c840" transform="rotate(54 38.22 44.84)"/><ellipse cx="32.45" cy="23.98" rx="1.7" ry="0.95" fill="#7f8423" transform="rotate(65 32.45 23.98)"/><ellipse cx="32.17" cy="25.79" rx="2.36" ry="1.22" fill="#c6c840" transform="rotate(66 32.17 25.79)"/><ellipse cx="25.95" cy="26.84" rx="2.08" ry="0.82" fill="#7f8423" transform="rotate(136 25.95 26.84)"/><ellipse cx="30.23" cy="44.14" rx="1.67" ry="0.74" fill="#9ea12b" transform="rotate(28 30.23 44.14)"/><ellipse cx="24.47" cy="23.1" rx="1.48" ry="1.08" fill="#c6c840" transform="rotate(141 24.47 23.1)"/><path d="M34.7 46 V16 M34.7 42 L27 33 M34.7 38 L42 29 M34.7 32 L29.5 23 M34.7 27 L39 19 M34.7 22 L32 15" stroke="#cfcfcf" stroke-width="0.8" fill="none" opacity="0.75"/><ellipse cx="30.31" cy="14.24" rx="1.39" ry="1.14" fill="#242424"/><ellipse cx="36.11" cy="14.27" rx="0.92" ry="1.05" fill="#242424"/><ellipse cx="27.24" cy="35.89" rx="0.98" ry="1.06" fill="#242424"/><ellipse cx="42.74" cy="31.57" rx="1.12" ry="0.8" fill="#242424"/><ellipse cx="36.7" cy="46.03" rx="1.19" ry="0.92" fill="#242424"/><ellipse cx="40.48" cy="38.25" rx="1.53" ry="0.85" fill="#242424"/><ellipse cx="38.65" cy="41.62" rx="1.48" ry="1.08" fill="#242424"/><ellipse cx="43.76" cy="41.86" rx="1.57" ry="0.98" fill="#242424"/><ellipse cx="41.1" cy="31.65" rx="1.44" ry="0.85" fill="#242424"/><ellipse cx="25.3" cy="28" rx="1.39" ry="1.19" fill="#242424"/><ellipse cx="26.47" cy="26.36" rx="0.96" ry="0.85" fill="#242424"/><ellipse cx="44.68" cy="23.19" rx="0.85" ry="0.79" fill="#242424"/><ellipse cx="36.53" cy="15.73" rx="1.42" ry="0.71" fill="#242424"/><ellipse cx="34.33" cy="13.13" rx="1.27" ry="1.15" fill="#242424"/><ellipse cx="31.97" cy="11.68" rx="0.95" ry="0.73" fill="#242424"/><ellipse cx="38.76" cy="20.95" rx="1.28" ry="0.73" fill="#242424"/><ellipse cx="31.15" cy="18.85" rx="0.94" ry="1.05" fill="#242424"/><ellipse cx="35.77" cy="23.96" rx="1.45" ry="0.89" fill="#242424"/><ellipse cx="42.39" cy="21.95" rx="1.53" ry="0.81" fill="#242424"/><ellipse cx="49" cy="32.46" rx="1.19" ry="0.73" fill="#242424"/><ellipse cx="38.3" cy="12.44" rx="1.44" ry="0.83" fill="#242424"/><ellipse cx="35.18" cy="31.78" rx="1.02" ry="1.19" fill="#242424"/></g></svg>
<svg style="left:606.8px;top:661.4px;" width="17.5" height="18.5" viewBox="0 0 17.5 18.5"><polygon points="8.75,0 17.5,4.62 17.5,13.88 8.75,18.5 0,13.88 0,4.62" fill="#7fd0f5"/><polygon points="0,4.62 8.75,9.25 8.75,18.5 0,13.88" fill="#b9b9b9"/><clipPath id="c667468"><polygon points="0,4.62 8.75,9.25 8.75,18.5 0,13.88"/></clipPath><g clip-path="url(#c667468)"><line x1="0" y1="-9.75" x2="8.75" y2="-18.5" stroke="#4a4a4a" stroke-width="1.57"/><line x1="0" y1="-5.9" x2="8.75" y2="-14.65" stroke="#4a4a4a" stroke-width="1.57"/><line x1="0" y1="-2.05" x2="8.75" y2="-10.8" stroke="#4a4a4a" stroke-width="1.57"/><line x1="0" y1="1.8" x2="8.75" y2="-6.95" stroke="#4a4a4a" stroke-width="1.57"/><line x1="0" y1="5.65" x2="8.75" y2="-3.1" stroke="#4a4a4a" stroke-width="1.57"/><line x1="0" y1="9.5" x2="8.75" y2="0.75" stroke="#4a4a4a" stroke-width="1.57"/><line x1="0" y1="13.35" x2="8.75" y2="4.6" stroke="#4a4a4a" stroke-width="1.57"/><line x1="0" y1="17.2" x2="8.75" y2="8.45" stroke="#4a4a4a" stroke-width="1.57"/><line x1="0" y1="21.05" x2="8.75" y2="12.3" stroke="#4a4a4a" stroke-width="1.57"/><line x1="0" y1="24.9" x2="8.75" y2="16.15" stroke="#4a4a4a" stroke-width="1.57"/><line x1="0" y1="28.75" x2="8.75" y2="20" stroke="#4a4a4a" stroke-width="1.57"/><line x1="0" y1="32.6" x2="8.75" y2="23.85" stroke="#4a4a4a" stroke-width="1.57"/><line x1="0" y1="36.45" x2="8.75" y2="27.7" stroke="#4a4a4a" stroke-width="1.57"/><line x1="0" y1="40.3" x2="8.75" y2="31.55" stroke="#4a4a4a" stroke-width="1.57"/><line x1="0" y1="44.15" x2="8.75" y2="35.4" stroke="#4a4a4a" stroke-width="1.57"/></g><path d="M0 4.62 L8.75 9.25 L17.5 4.62 M8.75 9.25 V18.5" fill="none" stroke="#333333" stroke-width="1.4"/></svg>
<span style="left:626.7px;top:660.6px;font-size:15px;line-height:20px;color:#d2d2d2;letter-spacing:0.58px;">treeyell...</span>
<div style="left:511.5px;top:705px;width:71px;height:71px;background:linear-gradient(to bottom,#545454,#4e4e4e);box-shadow:0 1.5px 2.5px rgba(0,0,0,0.5), -1px 0 1.5px rgba(0,0,0,0.25);"></div>
<svg style="left:511.5px;top:705px;" width="71" height="71" viewBox="0 0 71 71"><defs><filter id="bl10" x="-10%" y="-10%" width="120%" height="120%"><feGaussianBlur stdDeviation="0.55"/></filter></defs><g filter="url(#bl10)"><path d="M35 11.6 C41 10.5 45.5 14.5 44 20 L42.5 25 L40 28 L31 30 L27.5 26 C27 20 29 13.5 35 11.6 Z" fill="#c9923f"/><path d="M27.5 26 L33 28 L34 40 L31 47 L26.5 45 L25.5 36 Z" fill="#cf9944"/><path d="M33 27.5 L43 25.5 L46.5 31 L45 39 L37 41.5 L33.5 38 Z" fill="#3a6288"/><path d="M36 30 L42 29 L43 35 L37.5 37 Z" fill="#6b4a3a"/><circle cx="40.5" cy="20.5" r="3" fill="#f2d4b4"/><path d="M36.5 41 L43.5 39.5 L43 50 L41.5 60.8 L37 60.8 L37 50 Z" fill="#8a4526"/><path d="M37 48 L43 47 L43 50 L37 51 Z M37 54 L42.3 53.4 L42 56 L37 56.6 Z" fill="#c87a34"/><path d="M28 44 L33.5 46 L32 53 L28.5 52 Z" fill="#c48d3c"/></g></svg>
<svg style="left:506px;top:781.8px;" width="17.5" height="18.5" viewBox="0 0 17.5 18.5"><polygon points="8.75,0 17.5,4.62 17.5,13.88 8.75,18.5 0,13.88 0,4.62" fill="#7fd0f5"/><polygon points="0,4.62 8.75,9.25 8.75,18.5 0,13.88" fill="#b9b9b9"/><clipPath id="c786860"><polygon points="0,4.62 8.75,9.25 8.75,18.5 0,13.88"/></clipPath><g clip-path="url(#c786860)"><line x1="0" y1="-9.75" x2="8.75" y2="-18.5" stroke="#4a4a4a" stroke-width="1.57"/><line x1="0" y1="-5.9" x2="8.75" y2="-14.65" stroke="#4a4a4a" stroke-width="1.57"/><line x1="0" y1="-2.05" x2="8.75" y2="-10.8" stroke="#4a4a4a" stroke-width="1.57"/><line x1="0" y1="1.8" x2="8.75" y2="-6.95" stroke="#4a4a4a" stroke-width="1.57"/><line x1="0" y1="5.65" x2="8.75" y2="-3.1" stroke="#4a4a4a" stroke-width="1.57"/><line x1="0" y1="9.5" x2="8.75" y2="0.75" stroke="#4a4a4a" stroke-width="1.57"/><line x1="0" y1="13.35" x2="8.75" y2="4.6" stroke="#4a4a4a" stroke-width="1.57"/><line x1="0" y1="17.2" x2="8.75" y2="8.45" stroke="#4a4a4a" stroke-width="1.57"/><line x1="0" y1="21.05" x2="8.75" y2="12.3" stroke="#4a4a4a" stroke-width="1.57"/><line x1="0" y1="24.9" x2="8.75" y2="16.15" stroke="#4a4a4a" stroke-width="1.57"/><line x1="0" y1="28.75" x2="8.75" y2="20" stroke="#4a4a4a" stroke-width="1.57"/><line x1="0" y1="32.6" x2="8.75" y2="23.85" stroke="#4a4a4a" stroke-width="1.57"/><line x1="0" y1="36.45" x2="8.75" y2="27.7" stroke="#4a4a4a" stroke-width="1.57"/><line x1="0" y1="40.3" x2="8.75" y2="31.55" stroke="#4a4a4a" stroke-width="1.57"/><line x1="0" y1="44.15" x2="8.75" y2="35.4" stroke="#4a4a4a" stroke-width="1.57"/></g><path d="M0 4.62 L8.75 9.25 L17.5 4.62 M8.75 9.25 V18.5" fill="none" stroke="#333333" stroke-width="1.4"/></svg>
<span style="left:525.3px;top:781px;font-size:15px;line-height:20px;color:#d2d2d2;letter-spacing:0.75px;">unitych...</span>
<svg style="left:615.5px;top:707px;" width="62.8" height="67.3" viewBox="0 0 62.8 67.3"><polygon points="31.4,0 62.8,16.82 62.8,50.47 31.4,67.3 0,50.47 0,16.82" fill="#7fd0f5"/><path d="M0 16.82 L31.4 33.65 L62.8 16.82 M31.4 33.65 V67.3" fill="none" stroke="#333333" stroke-width="5.4"/></svg>
<span style="left:620px;top:781px;font-size:15px;line-height:20px;color:#d2d2d2;letter-spacing:0.91px;">Volume</span>
<div style="left:717.6px;top:0px;width:898.4px;height:23.5px;background:#282828;"></div>
<div style="left:717.6px;top:0px;width:141.4px;height:23.5px;background:#3c3c3c;"></div>
<div style="left:717.6px;top:23.5px;width:898.4px;height:89.5px;background:#3c3c3c;"></div>
<div style="left:859px;top:23.3px;width:757px;height:1.5px;background:#242424;"></div>
<div style="left:717.6px;top:113px;width:898.4px;height:1.8px;background:#1e1e1e;"></div>
<div style="left:717.6px;top:114.8px;width:898.4px;height:29.5px;background:#3e3e3e;"></div>
<div style="left:717.6px;top:144.3px;width:898.4px;height:108px;background:#383838;"></div>
<div style="left:717.6px;top:252.3px;width:898.4px;height:2.4px;background:#1e1e1e;"></div>
<div style="left:717.6px;top:254.7px;width:898.4px;height:29.6px;background:#3e3e3e;"></div>
<div style="left:717.6px;top:284.3px;width:898.4px;height:136.7px;background:#383838;"></div>
<div style="left:717.6px;top:421px;width:898.4px;height:2px;background:#222222;"></div>
<div style="left:717.6px;top:423px;width:898.4px;height:25.8px;background:#313131;"></div>
<div style="left:717.6px;top:448.8px;width:898.4px;height:357.2px;background:#383838;"></div>
<div style="left:717.6px;top:806px;width:898.4px;height:2px;background:#262626;"></div>
<div style="left:717.6px;top:808px;width:898.4px;height:26px;background:#313131;"></div>
<div style="left:717.6px;top:834px;width:898.4px;height:131.3px;background:#383838;"></div>
<div style="left:717.6px;top:965.3px;width:898.4px;height:2px;background:#2a2a2a;"></div>
<div style="left:717.6px;top:967.3px;width:898.4px;height:55.7px;background:#383838;"></div>
<div style="left:717.6px;top:1023px;width:898.4px;height:2.4px;background:#1e1e1e;"></div>
<div style="left:717.6px;top:1025.4px;width:898.4px;height:217.6px;background:#383838;"></div>
<svg style="left:731px;top:3.3px;" width="14.4" height="14.4" viewBox="0 0 14.4 14.4"><circle cx="7.2" cy="7.2" r="7.2" fill="#c4c4c4"/><circle cx="7" cy="3.6" r="1.35" fill="#3c3c3c"/><path d="M5 6 H8.2 V10.4 H9.4 V11.6 H4.9 V10.4 H6 V7.2 H5 Z" fill="#3c3c3c"/></svg>
<span style="left:752.8px;top:-1.5px;font-size:18px;line-height:24px;color:#d2d2d2;letter-spacing:0.97px;">Inspector</span>
<svg style="left:1563.6px;top:2.3px;" width="13" height="16" viewBox="0 0 13 16"><rect x="0.8" y="7.6" width="10.5" height="6.4" rx="0.9" fill="none" stroke="#c4c4c4" stroke-width="1.5"/><path d="M9.5 7.4 V4.4 a3.55 3.55 0 0 0 -7.1 0 V4.9" fill="none" stroke="#c4c4c4" stroke-width="1.5"/></svg>
<svg style="left:1593px;top:0.85px;" width="6" height="16.9" viewBox="0 0 6 16.9"><rect x="1.1" y="1.1" width="3.8" height="3.8" rx="1.2" fill="#c4c4c4"/><rect x="1.1" y="6.55" width="3.8" height="3.8" rx="1.2" fill="#c4c4c4"/><rect x="1.1" y="12" width="3.8" height="3.8" rx="1.2" fill="#c4c4c4"/></svg>
<svg style="left:729px;top:41px;" width="29.5" height="31.5" viewBox="0 0 29.5 31.5"><polygon points="14.75,1 28.5,8.38 28.5,23.12 14.75,30.5 1,23.12 1,8.38" fill="none" stroke="#c4c4c4" stroke-width="2" stroke-linejoin="round"/><path d="M1 8.38 L14.75 15.75 L28.5 8.38 M14.75 15.75 V30.5" fill="none" stroke="#c4c4c4" stroke-width="2"/></svg>
<svg style="left:757.55px;top:70.75px;" width="10.5" height="6.5" viewBox="0 0 10.5 6.5"><polygon points="0,0 10.5,0 5.25,6.5" fill="#c4c4c4"/></svg>
<svg style="left:787.9px;top:41px;" width="20.5" height="21" viewBox="0 0 20.5 21"><rect x="0.5" y="0.5" width="19.5" height="20" rx="3" fill="#262626" stroke="#1f1f1f"/><path d="M4.41 11.45 L8.4 14.8 L16.2 6.3" fill="none" stroke="#e4e4e4" stroke-width="2"/></svg>
<div style="left:818px;top:38.4px;width:675px;height:25.6px;background:#2a2a2a;border-radius:4px;box-shadow:inset 0 0 0 1px #212121, inset 0 2px 0 0 #141414;"></div>
<span style="left:823px;top:40.9px;font-size:17.4px;line-height:24px;color:#d2d2d2;letter-spacing:1.47px;font-weight:bold;">Volume</span>
<svg style="left:1499.4px;top:41px;" width="20.6" height="20.5" viewBox="0 0 20.6 20.5"><rect x="0.5" y="0.5" width="19.6" height="19.5" rx="3" fill="#2a2a2a" stroke="#1f1f1f"/></svg>
<span style="left:1525.8px;top:39.5px;font-size:18px;line-height:24px;color:#d2d2d2;letter-spacing:0.95px;">Static</span>
<svg style="left:1595px;top:48px;" width="11" height="7" viewBox="0 0 11 7"><polygon points="0,0 11,0 5.5,7" fill="#c4c4c4"/></svg>
<span style="left:778px;top:75.7px;font-size:18px;line-height:24px;color:#d2d2d2;letter-spacing:2.28px;">Tag</span>
<div style="left:818.3px;top:75.4px;width:364.2px;height:24.3px;background:#515151;border-radius:4px;box-shadow:inset 0 0 0 1px #444444, 0 1px 0 0 #2c2c2c;"></div>
<svg style="left:1164px;top:84.35px;" width="11" height="7" viewBox="0 0 11 7"><polygon points="0,0 11,0 5.5,7" fill="#c4c4c4"/></svg>
<span style="left:822.6px;top:75.7px;font-size:18px;line-height:24px;color:#d2d2d2;letter-spacing:1.2px;">Untagged</span>
<span style="left:1203.5px;top:75.7px;font-size:18px;line-height:24px;color:#d2d2d2;letter-spacing:1.39px;">Layer</span>
<div style="left:1261px;top:75.4px;width:347px;height:24.3px;background:#515151;border-radius:4px;box-shadow:inset 0 0 0 1px #444444, 0 1px 0 0 #2c2c2c;"></div>
<svg style="left:1589.5px;top:84.35px;" width="11" height="7" viewBox="0 0 11 7"><polygon points="0,0 11,0 5.5,7" fill="#c4c4c4"/></svg>
<span style="left:1265px;top:75.7px;font-size:18px;line-height:24px;color:#d2d2d2;letter-spacing:1.34px;">Default</span>
<svg style="left:727.4px;top:124.9px;" width="12.6" height="11.2" viewBox="0 0 12.6 11.2"><polygon points="0,0 12.6,0 6.3,11.2" fill="#6a6a6a"/></svg>
<svg style="left:751px;top:121px;" width="19.5" height="17.5" viewBox="0 0 19.5 17.5"><line x1="9.2" y1="2" x2="9.2" y2="6.9" stroke="#a5e065" stroke-width="4" stroke-linecap="round"/><line x1="2.6" y1="13.8" x2="6.2" y2="11.8" stroke="#5db8ee" stroke-width="4" stroke-linecap="round"/><line x1="13.2" y1="11.8" x2="16.8" y2="14" stroke="#ee6a42" stroke-width="4" stroke-linecap="round"/></svg>
<span style="left:808.4px;top:119px;font-size:17.4px;line-height:24px;color:#d2d2d2;letter-spacing:1.37px;font-weight:bold;">Transform</span>
<svg style="left:1529.7px;top:122.8px;" width="14.6" height="14.6" viewBox="0 0 14.6 14.6"><circle cx="7.3" cy="7.3" r="7.3" fill="#c4c4c4"/><text x="7.3" y="12.12" font-family="Liberation Sans, sans-serif" font-weight="bold" font-size="13.51" text-anchor="middle" fill="#3e3e3e">?</text></svg>
<svg style="left:1559.5px;top:123px;" width="15" height="14" viewBox="0 0 15 14"><path d="M0.4 3.4 H7.8 M12 3.4 H14.7 M0.4 10.5 H2.8 M7.6 10.5 H14.7" stroke="#c4c4c4" stroke-width="1.4" fill="none"/><path d="M10.6 0 V6.5 M6.2 7.7 V13.9" stroke="#c4c4c4" stroke-width="2.3" fill="none"/></svg>
<svg style="left:1593.9px;top:121.55px;" width="6" height="16.9" viewBox="0 0 6 16.9"><rect x="1.1" y="1.1" width="3.8" height="3.8" rx="1.2" fill="#c4c4c4"/><rect x="1.1" y="6.55" width="3.8" height="3.8" rx="1.2" fill="#c4c4c4"/><rect x="1.1" y="12" width="3.8" height="3.8" rx="1.2" fill="#c4c4c4"/></svg>
<span style="left:745.8px;top:153.8px;font-size:18px;line-height:24px;color:#d2d2d2;letter-spacing:0.82px;">Position</span>
<span style="left:1093.8px;top:154.1px;font-size:18px;line-height:24px;color:#d2d2d2;letter-spacing:-0.42px;">X</span>
<div style="left:1116px;top:152.6px;width:145.4px;height:25.6px;background:#2a2a2a;border-radius:4px;box-shadow:inset 0 0 0 1px #212121, inset 0 2px 0 0 #141414;"></div>
<span style="left:1119.8px;top:154.1px;font-size:18px;line-height:24px;color:#d2d2d2;letter-spacing:1.58px;">0</span>
<span style="left:1269px;top:154.1px;font-size:18px;line-height:24px;color:#d2d2d2;letter-spacing:-0.42px;">Y</span>
<div style="left:1290.5px;top:152.6px;width:145px;height:25.6px;background:#2a2a2a;border-radius:4px;box-shadow:inset 0 0 0 1px #212121, inset 0 2px 0 0 #141414;"></div>
<span style="left:1294.3px;top:154.1px;font-size:18px;line-height:24px;color:#d2d2d2;letter-spacing:1.58px;">0</span>
<span style="left:1443.3px;top:154.1px;font-size:18px;line-height:24px;color:#d2d2d2;letter-spacing:0.6px;">Z</span>
<div style="left:1465.5px;top:152.6px;width:144.5px;height:25.6px;background:#2a2a2a;border-radius:4px;box-shadow:inset 0 0 0 1px #212121, inset 0 2px 0 0 #141414;"></div>
<span style="left:1469.3px;top:154.1px;font-size:18px;line-height:24px;color:#d2d2d2;letter-spacing:1.58px;">0</span>
<span style="left:745.8px;top:183.8px;font-size:18px;line-height:24px;color:#d2d2d2;letter-spacing:0.82px;">Rotation</span>
<span style="left:1093.8px;top:184.1px;font-size:18px;line-height:24px;color:#d2d2d2;letter-spacing:-0.42px;">X</span>
<div style="left:1116px;top:182.65px;width:145.4px;height:25.6px;background:#2a2a2a;border-radius:4px;box-shadow:inset 0 0 0 1px #212121, inset 0 2px 0 0 #141414;"></div>
<span style="left:1119.8px;top:184.1px;font-size:18px;line-height:24px;color:#d2d2d2;letter-spacing:1.58px;">0</span>
<span style="left:1269px;top:184.1px;font-size:18px;line-height:24px;color:#d2d2d2;letter-spacing:-0.42px;">Y</span>
<div style="left:1290.5px;top:182.65px;width:145px;height:25.6px;background:#2a2a2a;border-radius:4px;box-shadow:inset 0 0 0 1px #212121, inset 0 2px 0 0 #141414;"></div>
<span style="left:1294.3px;top:184.1px;font-size:18px;line-height:24px;color:#d2d2d2;letter-spacing:1.58px;">0</span>
<span style="left:1443.3px;top:184.1px;font-size:18px;line-height:24px;color:#d2d2d2;letter-spacing:0.6px;">Z</span>
<div style="left:1465.5px;top:182.65px;width:144.5px;height:25.6px;background:#2a2a2a;border-radius:4px;box-shadow:inset 0 0 0 1px #212121, inset 0 2px 0 0 #141414;"></div>
<span style="left:1469.3px;top:184.1px;font-size:18px;line-height:24px;color:#d2d2d2;letter-spacing:1.58px;">0</span>
<span style="left:745.8px;top:213.8px;font-size:18px;line-height:24px;color:#d2d2d2;letter-spacing:1.19px;">Scale</span>
<span style="left:1093.8px;top:214.1px;font-size:18px;line-height:24px;color:#d2d2d2;letter-spacing:-0.42px;">X</span>
<div style="left:1116px;top:212.7px;width:145.4px;height:25.6px;background:#2a2a2a;border-radius:4px;box-shadow:inset 0 0 0 1px #212121, inset 0 2px 0 0 #141414;"></div>
<span style="left:1119.8px;top:214.1px;font-size:18px;line-height:24px;color:#d2d2d2;letter-spacing:-1.92px;">1</span>
<span style="left:1269px;top:214.1px;font-size:18px;line-height:24px;color:#d2d2d2;letter-spacing:-0.42px;">Y</span>
<div style="left:1290.5px;top:212.7px;width:145px;height:25.6px;background:#2a2a2a;border-radius:4px;box-shadow:inset 0 0 0 1px #212121, inset 0 2px 0 0 #141414;"></div>
<span style="left:1294.3px;top:214.1px;font-size:18px;line-height:24px;color:#d2d2d2;letter-spacing:-1.92px;">1</span>
<span style="left:1443.3px;top:214.1px;font-size:18px;line-height:24px;color:#d2d2d2;letter-spacing:0.6px;">Z</span>
<div style="left:1465.5px;top:212.7px;width:144.5px;height:25.6px;background:#2a2a2a;border-radius:4px;box-shadow:inset 0 0 0 1px #212121, inset 0 2px 0 0 #141414;"></div>
<span style="left:1469.3px;top:214.1px;font-size:18px;line-height:24px;color:#d2d2d2;letter-spacing:-1.92px;">1</span>
<svg style="left:1060.5px;top:217px;" width="19.5" height="16" viewBox="0 0 19.5 16"><path d="M8.2 4.4 H5.6 a3.6 3.6 0 0 0 0 7.2 H8.2 M11.4 4.4 H13.9 a3.6 3.6 0 0 1 0 7.2 H11.4 M6.4 8 H13.2" fill="none" stroke="#c4c4c4" stroke-width="1.5"/><line x1="2.6" y1="1" x2="16.4" y2="15" stroke="#3a3a3a" stroke-width="3.2"/><line x1="3.2" y1="1.4" x2="16.2" y2="14.6" stroke="#c4c4c4" stroke-width="1.3"/></svg>
<svg style="left:727.1px;top:265.2px;" width="12.6" height="11.2" viewBox="0 0 12.6 11.2"><polygon points="0,0 12.6,0 6.3,11.2" fill="#6a6a6a"/></svg>
<svg style="left:749.8px;top:258.7px;" width="20.5" height="22.5" viewBox="0 0 20.5 22.5"><defs><linearGradient id="vgi" x1="0" y1="0" x2="0" y2="1"><stop offset="0" stop-color="#a2a2a2"/><stop offset="0.42" stop-color="#8e8e8e"/><stop offset="0.6" stop-color="#7c7c7c"/><stop offset="0.62" stop-color="#484848"/><stop offset="1" stop-color="#3c3c3c"/></linearGradient></defs><polygon points="10.2,1 19.5,6 19.5,16.5 10.2,21.5 1,16.5 1,6" fill="url(#vgi)"/><polygon points="10.2,1 19.5,6 19.5,16.5 10.2,21.5 1,16.5 1,6" fill="none" stroke="#e6e6e6" stroke-width="1.5" stroke-linejoin="round"/><path d="M1 6 L10.2 11 L19.5 6 M10.2 11 V21.5" fill="none" stroke="#e6e6e6" stroke-width="1.5"/></svg>
<svg style="left:778px;top:259px;" width="21" height="21" viewBox="0 0 21 21"><rect x="0.5" y="0.5" width="20" height="20" rx="3" fill="#262626" stroke="#1f1f1f"/><path d="M4.51 11.45 L8.61 14.8 L16.59 6.3" fill="none" stroke="#e4e4e4" stroke-width="2"/></svg>
<span style="left:808.4px;top:258.8px;font-size:17.4px;line-height:24px;color:#d2d2d2;letter-spacing:1.39px;font-weight:bold;">Volume</span>
<svg style="left:1529.7px;top:263px;" width="14.6" height="14.6" viewBox="0 0 14.6 14.6"><circle cx="7.3" cy="7.3" r="7.3" fill="#c4c4c4"/><text x="7.3" y="12.12" font-family="Liberation Sans, sans-serif" font-weight="bold" font-size="13.51" text-anchor="middle" fill="#3e3e3e">?</text></svg>
<svg style="left:1559.5px;top:263.2px;" width="15" height="14" viewBox="0 0 15 14"><path d="M0.4 3.4 H7.8 M12 3.4 H14.7 M0.4 10.5 H2.8 M7.6 10.5 H14.7" stroke="#c4c4c4" stroke-width="1.4" fill="none"/><path d="M10.6 0 V6.5 M6.2 7.7 V13.9" stroke="#c4c4c4" stroke-width="2.3" fill="none"/></svg>
<svg style="left:1593.9px;top:261.75px;" width="6" height="16.9" viewBox="0 0 6 16.9"><rect x="1.1" y="1.1" width="3.8" height="3.8" rx="1.2" fill="#c4c4c4"/><rect x="1.1" y="6.55" width="3.8" height="3.8" rx="1.2" fill="#c4c4c4"/><rect x="1.1" y="12" width="3.8" height="3.8" rx="1.2" fill="#c4c4c4"/></svg>
<span style="left:745.8px;top:294px;font-size:18px;line-height:24px;color:#d2d2d2;letter-spacing:1.69px;">Mode</span>
<span style="left:745.8px;top:324px;font-size:18px;line-height:24px;color:#d2d2d2;letter-spacing:1.18px;">Weight</span>
<span style="left:745.8px;top:354px;font-size:18px;line-height:24px;color:#d2d2d2;letter-spacing:0.73px;">Priority</span>
<span style="left:745.8px;top:384px;font-size:18px;line-height:24px;color:#d2d2d2;letter-spacing:0.84px;">Profile</span>
<div style="left:1094.7px;top:294.2px;width:513.9px;height:22.8px;background:#515151;border-radius:4px;box-shadow:inset 0 0 0 1px #444444, 0 1px 0 0 #2c2c2c;"></div>
<svg style="left:1590.7px;top:302.4px;" width="11" height="7" viewBox="0 0 11 7"><polygon points="0,0 11,0 5.5,7" fill="#c4c4c4"/></svg>
<span style="left:1098.7px;top:293.8px;font-size:18px;line-height:24px;color:#d2d2d2;letter-spacing:0.97px;">Global</span>
<div style="left:1093px;top:334.1px;width:434px;height:2.8px;background:#5c5c5c;border-radius:1.4px;"></div>
<div style="left:1512.8px;top:327.8px;width:15.4px;height:15.4px;border-radius:50%;background:#999999;"></div>
<div style="left:1536.4px;top:323px;width:73.6px;height:25px;background:#2a2a2a;border-radius:4px;box-shadow:inset 0 0 0 1px #212121, inset 0 2px 0 0 #141414;"></div>
<span style="left:1540.5px;top:324px;font-size:18px;line-height:24px;color:#d2d2d2;letter-spacing:-1.92px;">1</span>
<div style="left:1093.7px;top:353.4px;width:516.3px;height:24.2px;background:#2a2a2a;border-radius:4px;box-shadow:inset 0 0 0 1px #212121, inset 0 2px 0 0 #141414;"></div>
<span style="left:1096.6px;top:354px;font-size:18px;line-height:24px;color:#d2d2d2;letter-spacing:1.58px;">0</span>
<div style="left:1093.7px;top:383px;width:373.9px;height:25.4px;background:#2a2a2a;border-radius:4px;box-shadow:inset 0 0 0 1px #212121, inset 0 2px 0 0 #141414;"></div>
<div style="left:1440.5px;top:384px;width:26.1px;height:23.4px;background:#373737;border-radius:0 3px 3px 0;"></div>
<svg style="left:1444.8px;top:388.2px;" width="16" height="16" viewBox="0 0 16 16"><circle cx="8" cy="8" r="6.2" fill="none" stroke="#c4c4c4" stroke-width="1.5"/><circle cx="8" cy="8" r="2" fill="#c4c4c4"/></svg>
<svg style="left:1099px;top:388.6px;" width="13.6" height="16.4" viewBox="0 0 13.6 16.4"><rect x="0" y="0" width="13.6" height="16.4" rx="1.2" fill="#8e8e8e"/><rect x="0" y="0" width="13.6" height="3" rx="1.2" fill="#a5a5a5"/><rect x="0" y="13.6" width="13.6" height="2.8" rx="1.2" fill="#a0a0a0"/><path d="M6.8 3.8 L11 6 V11 L6.8 13.2 L2.6 11 V6 Z M2.6 6 L6.8 8.2 L11 6 M6.8 8.2 V13.2" fill="none" stroke="#e2e2e2" stroke-width="1.2"/></svg>
<span style="left:1115.8px;top:384.8px;font-size:18px;line-height:24px;color:#d2d2d2;letter-spacing:0.68px;">Volume Profile (Volume Profile)</span>
<div style="left:1477.9px;top:383px;width:63.1px;height:24.3px;background:#585858;border-radius:4px 0 0 4px;box-shadow:inset 0 0 0 1px #525252, 0 1px 0 0 #262626;"></div>
<div style="left:1542px;top:383px;width:66px;height:24.3px;background:#585858;border-radius:0 4px 4px 0;box-shadow:inset 0 0 0 1px #525252, 0 1px 0 0 #262626;"></div>
<span style="left:1488.6px;top:383.6px;font-size:18px;line-height:24px;color:#d2d2d2;letter-spacing:1.99px;">New</span>
<span style="left:1548.7px;top:383.6px;font-size:18px;line-height:24px;color:#d2d2d2;letter-spacing:1.19px;">Clone</span>
<svg style="left:748.2px;top:429px;" width="12.6" height="11" viewBox="0 0 12.6 11"><polygon points="0,0 12.6,0 6.3,11" fill="#6a6a6a"/></svg>
<svg style="left:770.5px;top:426.7px;" width="17" height="16.9" viewBox="0 0 17 16.9"><rect x="0.5" y="0.5" width="16" height="15.9" rx="3" fill="#262626" stroke="#1f1f1f"/><path d="M3.65 9.21 L6.97 11.91 L13.43 5.07" fill="none" stroke="#e4e4e4" stroke-width="1.75"/></svg>
<span style="left:793.4px;top:424.3px;font-size:17.4px;line-height:24px;color:#d2d2d2;letter-spacing:0.35px;font-weight:bold;">Bloom</span>
<svg style="left:1562.5px;top:428.9px;" width="14.6" height="14.6" viewBox="0 0 14.6 14.6"><circle cx="7.3" cy="7.3" r="7.3" fill="#c4c4c4"/><text x="7.3" y="12.12" font-family="Liberation Sans, sans-serif" font-weight="bold" font-size="13.51" text-anchor="middle" fill="#313131">?</text></svg>
<svg style="left:1594px;top:427.75px;" width="6" height="16.9" viewBox="0 0 6 16.9"><rect x="1.25" y="1.25" width="3.5" height="3.5" rx="1.2" fill="#c4c4c4"/><rect x="1.25" y="6.7" width="3.5" height="3.5" rx="1.2" fill="#c4c4c4"/><rect x="1.25" y="12.15" width="3.5" height="3.5" rx="1.2" fill="#c4c4c4"/></svg>
<span style="left:751.6px;top:449.8px;font-size:14.5px;line-height:24px;color:#7a7a7a;letter-spacing:1.24px;">ALL</span>
<span style="left:792.5px;top:449.8px;font-size:14.5px;line-height:24px;color:#7a7a7a;letter-spacing:1.33px;">NONE</span>
<span style="left:751.6px;top:476px;font-size:15px;line-height:24px;color:#d2d2d2;letter-spacing:0.77px;">Bloom</span>
<svg style="left:764.3px;top:509.4px;" width="17.7" height="17.5" viewBox="0 0 17.7 17.5"><rect x="0.5" y="0.5" width="16.7" height="16.5" rx="3" fill="#2a2a2a" stroke="#1f1f1f"/></svg>
<span style="left:790px;top:506px;font-size:18px;line-height:24px;color:#7b7b7b;letter-spacing:0.86px;">Threshold</span>
<svg style="left:764.3px;top:542.4px;" width="17.7" height="17.5" viewBox="0 0 17.7 17.5"><rect x="0.5" y="0.5" width="16.7" height="16.5" rx="3" fill="#262626" stroke="#1f1f1f"/><path d="M3.81 9.54 L7.26 12.34 L13.98 5.25" fill="none" stroke="#e4e4e4" stroke-width="1.75"/></svg>
<span style="left:790px;top:539px;font-size:18px;line-height:24px;color:#d2d2d2;letter-spacing:0.87px;">Intensity</span>
<svg style="left:764.3px;top:575.4px;" width="17.7" height="17.5" viewBox="0 0 17.7 17.5"><rect x="0.5" y="0.5" width="16.7" height="16.5" rx="3" fill="#2a2a2a" stroke="#1f1f1f"/></svg>
<span style="left:790px;top:572px;font-size:18px;line-height:24px;color:#7b7b7b;letter-spacing:0.84px;">Scatter</span>
<svg style="left:764.3px;top:608.4px;" width="17.7" height="17.5" viewBox="0 0 17.7 17.5"><rect x="0.5" y="0.5" width="16.7" height="16.5" rx="3" fill="#2a2a2a" stroke="#1f1f1f"/></svg>
<span style="left:790px;top:605px;font-size:18px;line-height:24px;color:#7b7b7b;letter-spacing:1.92px;">Tint</span>
<svg style="left:764.3px;top:641.4px;" width="17.7" height="17.5" viewBox="0 0 17.7 17.5"><rect x="0.5" y="0.5" width="16.7" height="16.5" rx="3" fill="#2a2a2a" stroke="#1f1f1f"/></svg>
<span style="left:790px;top:638px;font-size:18px;line-height:24px;color:#7b7b7b;letter-spacing:1.15px;">Clamp</span>
<svg style="left:764.3px;top:674.4px;" width="17.7" height="17.5" viewBox="0 0 17.7 17.5"><rect x="0.5" y="0.5" width="16.7" height="16.5" rx="3" fill="#2a2a2a" stroke="#1f1f1f"/></svg>
<span style="left:790px;top:671px;font-size:18px;line-height:24px;color:#7b7b7b;letter-spacing:0.88px;">High Quality Filtering</span>
<div style="left:1093.3px;top:504.5px;width:512.2px;height:25.3px;background:#303030;border-radius:4px;box-shadow:inset 0 0 0 1px #2b2b2b, inset 0 1.5px 0 0 #262626;"></div>
<span style="left:1097px;top:506px;font-size:18px;line-height:24px;color:#7b7b7b;letter-spacing:1.78px;">0.9</span>
<div style="left:1093.3px;top:537.8px;width:512.2px;height:25.2px;background:#2a2a2a;border-radius:4px;box-shadow:inset 0 0 0 1px #212121, inset 0 2px 0 0 #141414;"></div>
<span style="left:1096.6px;top:539px;font-size:18px;line-height:24px;color:#d2d2d2;letter-spacing:-1.92px;">1</span>
<div style="left:1093px;top:582.2px;width:431px;height:2.8px;background:#4f4f4f;border-radius:1.4px;"></div>
<div style="left:1383.3px;top:575.9px;width:15.4px;height:15.4px;border-radius:50%;background:#6e6e6e;"></div>
<div style="left:1531.4px;top:570.8px;width:74.1px;height:25px;background:#303030;border-radius:4px;box-shadow:inset 0 0 0 1px #2b2b2b, inset 0 1.5px 0 0 #262626;"></div>
<span style="left:1535px;top:572px;font-size:18px;line-height:24px;color:#7b7b7b;letter-spacing:1.28px;">0.7</span>
<div style="left:1093.3px;top:603.6px;width:484px;height:24.2px;background:#ffffff;"></div>
<div style="left:1578.7px;top:603.6px;width:26.8px;height:24.2px;background:#343434;border-radius:0 3px 3px 0;"></div>
<svg style="left:1584.5px;top:607.5px;" width="16" height="17" viewBox="0 0 16 17"><path d="M1.2 15.8 L2.2 12.2 L9.6 4.8 L12.2 7.4 L4.8 14.8 Z" fill="#8c8c8c"/><path d="M8.6 3.2 L13.8 8.4" stroke="#8c8c8c" stroke-width="1.8"/><path d="M10.6 5 L13.2 2.4 a1.8 1.8 0 0 1 2.6 2.6 L13.2 7.6 Z" fill="#8c8c8c"/></svg>
<div style="left:1093.3px;top:636.2px;width:512.2px;height:25.6px;background:#303030;border-radius:4px;box-shadow:inset 0 0 0 1px #2b2b2b, inset 0 1.5px 0 0 #262626;"></div>
<span style="left:1097px;top:638px;font-size:18px;line-height:24px;color:#7b7b7b;letter-spacing:1.51px;">65472</span>
<svg style="left:1093.3px;top:672.4px;" width="20.4" height="19.6" viewBox="0 0 20.4 19.6"><rect x="0.5" y="0.5" width="19.4" height="18.6" rx="3" fill="#323232" stroke="#2c2c2c"/></svg>
<span style="left:751.6px;top:704px;font-size:15px;line-height:24px;color:#d2d2d2;letter-spacing:0.82px;">Lens Dirt</span>
<svg style="left:764.3px;top:737.4px;" width="17.7" height="17.5" viewBox="0 0 17.7 17.5"><rect x="0.5" y="0.5" width="16.7" height="16.5" rx="3" fill="#2a2a2a" stroke="#1f1f1f"/></svg>
<span style="left:790px;top:734px;font-size:18px;line-height:24px;color:#7b7b7b;letter-spacing:0.94px;">Dirt Texture</span>
<svg style="left:764.3px;top:770.4px;" width="17.7" height="17.5" viewBox="0 0 17.7 17.5"><rect x="0.5" y="0.5" width="16.7" height="16.5" rx="3" fill="#2a2a2a" stroke="#1f1f1f"/></svg>
<span style="left:790px;top:767px;font-size:18px;line-height:24px;color:#7b7b7b;letter-spacing:0.81px;">Dirt Intensity</span>
<div style="left:1093.3px;top:732.8px;width:512.2px;height:25.1px;background:#303030;border-radius:4px;box-shadow:inset 0 0 0 1px #2b2b2b, inset 0 1.5px 0 0 #262626;"></div>
<span style="left:1097px;top:734.6px;font-size:18px;line-height:24px;color:#7b7b7b;letter-spacing:0.85px;">None (Texture)</span>
<svg style="left:1583.2px;top:737.4px;" width="16" height="16" viewBox="0 0 16 16"><circle cx="8" cy="8" r="6.2" fill="none" stroke="#7c7c7c" stroke-width="1.5"/><circle cx="8" cy="8" r="2" fill="#7c7c7c"/></svg>
<div style="left:1093.3px;top:765.7px;width:512.2px;height:25px;background:#303030;border-radius:4px;box-shadow:inset 0 0 0 1px #2b2b2b, inset 0 1.5px 0 0 #262626;"></div>
<span style="left:1097px;top:767px;font-size:18px;line-height:24px;color:#7b7b7b;letter-spacing:1.58px;">0</span>
<svg style="left:748.2px;top:814.5px;" width="12.6" height="11" viewBox="0 0 12.6 11"><polygon points="0,0 12.6,0 6.3,11" fill="#6a6a6a"/></svg>
<svg style="left:770.6px;top:813px;" width="16.9" height="16.8" viewBox="0 0 16.9 16.8"><rect x="0.5" y="0.5" width="15.9" height="15.8" rx="3" fill="#262626" stroke="#1f1f1f"/><path d="M3.63 9.16 L6.93 11.84 L13.35 5.04" fill="none" stroke="#e4e4e4" stroke-width="1.75"/></svg>
<span style="left:793.6px;top:809.3px;font-size:17.4px;line-height:24px;color:#d2d2d2;letter-spacing:0.74px;font-weight:bold;">Motion Blur</span>
<svg style="left:1562.5px;top:814.4px;" width="14.6" height="14.6" viewBox="0 0 14.6 14.6"><circle cx="7.3" cy="7.3" r="7.3" fill="#c4c4c4"/><text x="7.3" y="12.12" font-family="Liberation Sans, sans-serif" font-weight="bold" font-size="13.51" text-anchor="middle" fill="#313131">?</text></svg>
<svg style="left:1594px;top:813.25px;" width="6" height="16.9" viewBox="0 0 6 16.9"><rect x="1.25" y="1.25" width="3.5" height="3.5" rx="1.2" fill="#c4c4c4"/><rect x="1.25" y="6.7" width="3.5" height="3.5" rx="1.2" fill="#c4c4c4"/><rect x="1.25" y="12.15" width="3.5" height="3.5" rx="1.2" fill="#c4c4c4"/></svg>
<span style="left:751.6px;top:835.7px;font-size:14.5px;line-height:24px;color:#7a7a7a;letter-spacing:1.24px;">ALL</span>
<span style="left:792.5px;top:835.7px;font-size:14.5px;line-height:24px;color:#7a7a7a;letter-spacing:1.33px;">NONE</span>
<svg style="left:764.3px;top:864.4px;" width="17.7" height="17.5" viewBox="0 0 17.7 17.5"><rect x="0.5" y="0.5" width="16.7" height="16.5" rx="3" fill="#262626" stroke="#1f1f1f"/><path d="M3.81 9.54 L7.26 12.34 L13.98 5.25" fill="none" stroke="#e4e4e4" stroke-width="1.75"/></svg>
<span style="left:790px;top:861px;font-size:18px;line-height:24px;color:#d2d2d2;letter-spacing:1.03px;">Quality</span>
<svg style="left:764.3px;top:897.4px;" width="17.7" height="17.5" viewBox="0 0 17.7 17.5"><rect x="0.5" y="0.5" width="16.7" height="16.5" rx="3" fill="#262626" stroke="#1f1f1f"/><path d="M3.81 9.54 L7.26 12.34 L13.98 5.25" fill="none" stroke="#e4e4e4" stroke-width="1.75"/></svg>
<span style="left:790px;top:894px;font-size:18px;line-height:24px;color:#d2d2d2;letter-spacing:0.87px;">Intensity</span>
<svg style="left:764.3px;top:930.4px;" width="17.7" height="17.5" viewBox="0 0 17.7 17.5"><rect x="0.5" y="0.5" width="16.7" height="16.5" rx="3" fill="#2a2a2a" stroke="#1f1f1f"/></svg>
<span style="left:790px;top:927px;font-size:18px;line-height:24px;color:#7b7b7b;letter-spacing:1.15px;">Clamp</span>
<div style="left:1094.5px;top:861.2px;width:510px;height:23.4px;background:#515151;border-radius:4px;box-shadow:inset 0 0 0 1px #444444, 0 1px 0 0 #2c2c2c;"></div>
<svg style="left:1585.7px;top:869.7px;" width="11" height="7" viewBox="0 0 11 7"><polygon points="0,0 11,0 5.5,7" fill="#c4c4c4"/></svg>
<span style="left:1098.5px;top:860.8px;font-size:18px;line-height:24px;color:#d2d2d2;letter-spacing:1.31px;">Medium</span>
<div style="left:1093px;top:903.9px;width:431.5px;height:2.8px;background:#5c5c5c;border-radius:1.4px;"></div>
<div style="left:1300.3px;top:897.6px;width:15.4px;height:15.4px;border-radius:50%;background:#999999;"></div>
<div style="left:1531.2px;top:892.4px;width:74.4px;height:25.9px;background:#2a2a2a;border-radius:4px;box-shadow:inset 0 0 0 1px #212121, inset 0 2px 0 0 #141414;"></div>
<span style="left:1535px;top:894px;font-size:18px;line-height:24px;color:#d2d2d2;letter-spacing:1.28px;">0.5</span>
<div style="left:1093px;top:937.1px;width:431.5px;height:2.8px;background:#4f4f4f;border-radius:1.4px;"></div>
<div style="left:1196.5px;top:930.8px;width:15.4px;height:15.4px;border-radius:50%;background:#6e6e6e;"></div>
<div style="left:1531.2px;top:925.5px;width:74.4px;height:25.5px;background:#303030;border-radius:4px;box-shadow:inset 0 0 0 1px #2b2b2b, inset 0 1.5px 0 0 #262626;"></div>
<span style="left:1535px;top:927px;font-size:18px;line-height:24px;color:#7b7b7b;letter-spacing:1.52px;">0.05</span>
<div style="left:747px;top:979.7px;width:861px;height:23.7px;background:#585858;border-radius:4px;box-shadow:inset 0 0 0 1px #525252, 0 1px 0 0 #262626;"></div>
<span style="left:1119.5px;top:979.5px;font-size:18px;line-height:24px;color:#d2d2d2;letter-spacing:0.69px;">Add Override</span>
<div style="left:997px;top:1039.4px;width:341px;height:32.6px;background:#585858;border-radius:4px;box-shadow:inset 0 0 0 1px #525252, 0 1px 0 0 #262626;"></div>
<span style="left:1096.5px;top:1043.5px;font-size:18px;line-height:24px;color:#d2d2d2;letter-spacing:0.88px;">Add Component</span>
<div style="left:709.5px;top:799.5px;width:902.5px;height:152px;border:3.4px solid #e25c5c;box-sizing:border-box;"></div>
<div style="left:728.8px;top:969.4px;width:853.7px;height:51.9px;border:3.4px solid #e25c5c;box-sizing:border-box;"></div>
</div></body></html>
